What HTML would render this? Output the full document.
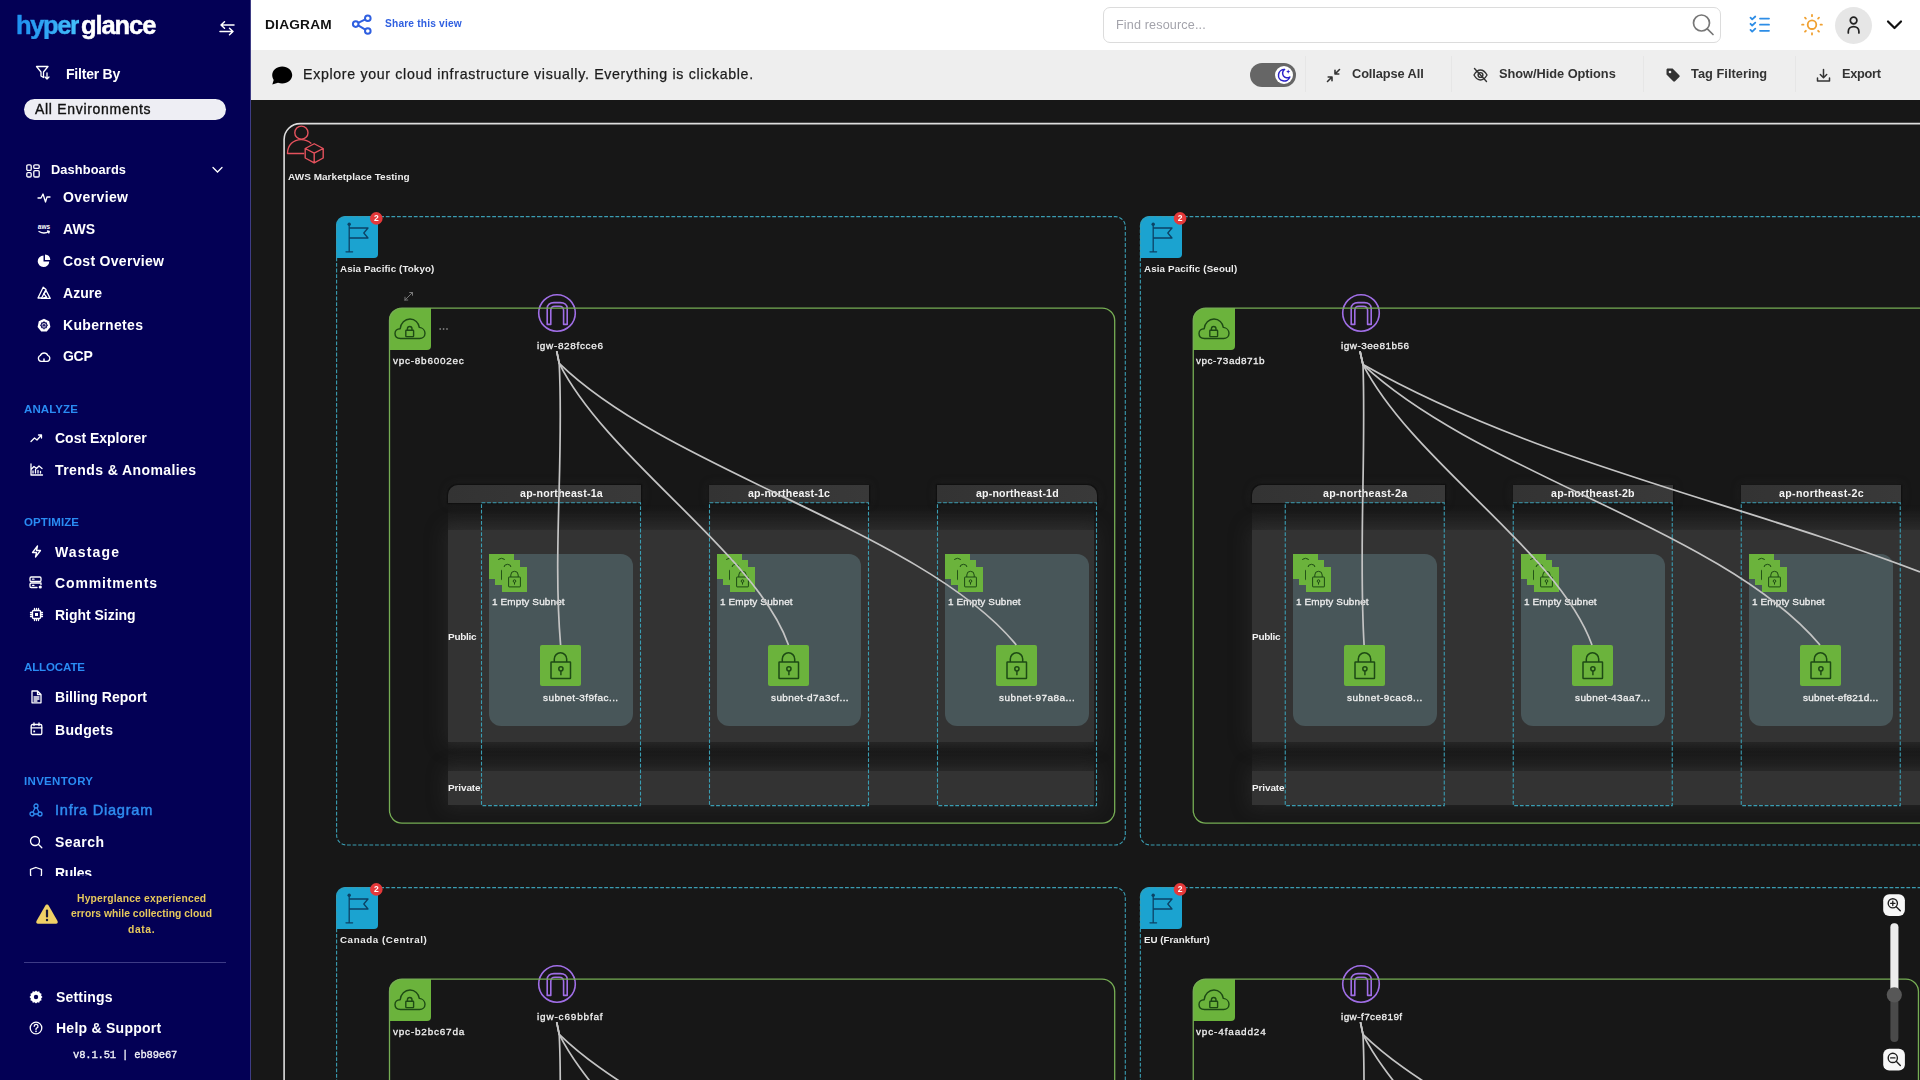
<!DOCTYPE html><html><head><meta charset="utf-8"><style>html,body{margin:0;padding:0;}body{width:1920px;height:1080px;overflow:hidden;position:relative;background:#171717;font-family:"Liberation Sans",sans-serif;}.t{position:absolute;white-space:nowrap;line-height:1;will-change:transform;}</style></head><body>
<div style="position:absolute;left:251px;top:100px;width:1669px;height:980px;background:#171717;"></div>
<div style="position:absolute;left:251px;top:100px;width:1669px;height:980px;overflow:hidden;">
<svg style="position:absolute;left:35px;top:24px;overflow:visible;" width="40" height="42" viewBox="0 0 40 42"><g fill="none" stroke="#e5525d" stroke-width="1.4" stroke-linejoin="round"><circle cx="15.4" cy="8.7" r="6.6"/><path d="M18.2,29.5 H1.5 C1.5,21 7.5,15.6 15,15.6 C19,15.6 22.5,17 25.3,19.5"/><path d="M28.2,19.75 L37.2,24.5 V34 L28.2,38.9 L19.2,34 V24.5 Z M19.2,24.5 L28.2,29.2 L37.2,24.5 M28.2,29.2 V38.9"/></g></svg>
<div class="t" style="left:37.00px;top:72.05px;font-size:9.98px;font-weight:bold;color:#ececec;letter-spacing:0.048px;font-family:'Liberation Sans',sans-serif;">AWS Marketplace Testing</div>
<div style="position:absolute;left:85.4px;top:115.6px;width:41.6px;height:42.4px;background:#1ba3d0;border-radius:9px 0 4px 0;"></div>
<svg style="position:absolute;left:85.39999999999998px;top:115.6px;overflow:visible;" width="42" height="42" viewBox="0 0 42 42"><g fill="none" stroke="#0c4265" stroke-width="1.3" stroke-linejoin="round" stroke-linecap="round"><path d="M13.2,9.5 V35.8 M10,35.8 H16.6 M13.2,12 H32 L27.8,17 L32,22 H13.2"/></g><circle cx="13.2" cy="8.3" r="1.7" fill="#0c4265"/></svg>
<div class="t" style="left:89.40px;top:164.32px;font-size:9.78px;font-weight:bold;color:#ededed;letter-spacing:0.116px;font-family:'Liberation Sans',sans-serif;">Asia Pacific (Tokyo)</div>
<div style="position:absolute;left:138px;top:208px;width:42px;height:42px;background:#6bb33c;border-radius:12px 0 4px 0;"></div>
<svg style="position:absolute;left:138px;top:208px;overflow:visible;" width="42" height="42" viewBox="0 0 42 42"><g fill="none" stroke="#1d4a14" stroke-width="1.4" stroke-linejoin="round"><path d="M11.5,30.5 C8,30.5 6,28.3 6,25.6 C6,22.8 8.2,20.7 11.2,20.7 C11.8,15.2 15.8,11 21,11 C26,11 29.7,14.6 30.3,19.4 C33.6,19.8 36,22.3 36,25.3 C36,28.3 33.6,30.5 30.6,30.5 Z"/><rect x="16.8" y="22.3" width="7.8" height="6.3" rx="0.6"/><path d="M18.4,22.3 V20.8 A2.3,2.3 0 0 1 23,20.8 V22.3"/></g></svg>
<svg style="position:absolute;left:188px;top:227px;overflow:visible;" width="10" height="4" viewBox="0 0 10 4"><g fill="#7a7a7a"><circle cx="1.2" cy="2" r="0.9"/><circle cx="4.6" cy="2" r="0.9"/><circle cx="8" cy="2" r="0.9"/></g></svg>
<svg style="position:absolute;left:152px;top:191px;overflow:visible;" width="12" height="11" viewBox="0 0 12 11"><g fill="none" stroke="#777" stroke-width="1" stroke-linecap="round"><path d="M2,9 L9.5,1.5 M2,9 V6.2 M2,9 H4.8 M9.5,1.5 H6.7 M9.5,1.5 V4.3"/></g></svg>
<div class="t" style="left:141.50px;top:256.45px;font-size:9.98px;font-weight:normal;color:#f0f0f0;letter-spacing:0.744px;font-family:'Liberation Sans',sans-serif;font-weight:500;-webkit-text-stroke:0.3px #f0f0f0;">vpc-8b6002ec</div>
<svg style="position:absolute;left:286.25px;top:193px;overflow:visible;" width="40" height="40" viewBox="0 0 40 40"><g fill="none" stroke="#a06ee6" stroke-width="1.6" stroke-linejoin="round"><circle cx="20" cy="20" r="18.3"/><path d="M10.2,31.4 V15.5 C10.2,11.8 13,9.6 17,9.6 H23.4 C27.4,9.6 30.2,11.8 30.2,15.5 V31.4 H26.6 V17.4 C26.6,14.8 25,13.3 22.4,13.3 H18 C15.4,13.3 13.8,14.8 13.8,17.4 V31.4 Z"/></g></svg>
<div class="t" style="left:285.90px;top:240.80px;font-size:9.98px;font-weight:normal;color:#f0f0f0;letter-spacing:0.653px;font-family:'Liberation Sans',sans-serif;font-weight:500;-webkit-text-stroke:0.3px #f0f0f0;">igw-828fcce6</div>
<div style="position:absolute;left:197px;top:406px;width:646px;height:23.6px;background:linear-gradient(to bottom,rgba(50,50,50,0),rgba(50,50,50,0.55));"></div>
<div style="position:absolute;left:197px;top:642.2px;width:646px;height:10px;background:linear-gradient(to top,rgba(50,50,50,0),rgba(50,50,50,0.3));"></div>
<div style="position:absolute;left:197px;top:650px;width:646px;height:20.5px;background:linear-gradient(to bottom,rgba(50,50,50,0),rgba(50,50,50,0.4));"></div>
<div style="position:absolute;left:197px;top:429.6px;width:646px;height:212.6px;background:#333333;box-shadow:0 0 18px 3px rgba(64,64,64,0.35);"></div>
<div style="position:absolute;left:197px;top:670.5px;width:646px;height:34.3px;background:#333333;box-shadow:0 0 18px 3px rgba(64,64,64,0.35);"></div>
<div style="position:absolute;left:197px;top:385px;width:193px;height:17.5px;background:linear-gradient(90deg,#333,#393939);border-radius:10px 0 0 0;box-shadow:0 0 2px 0.5px rgba(0,0,0,0.55),0 0 10px 1px rgba(60,60,60,0.25);"></div>
<div class="t" style="left:268.65px;top:387.82px;font-size:10.61px;font-weight:bold;color:#f4f4f4;letter-spacing:0.227px;font-family:'Liberation Sans',sans-serif;">ap-northeast-1a</div>
<div style="position:absolute;left:458px;top:385px;width:160px;height:17.5px;background:linear-gradient(90deg,#333,#393939);border-radius:0;box-shadow:0 0 2px 0.5px rgba(0,0,0,0.55),0 0 10px 1px rgba(60,60,60,0.25);"></div>
<div class="t" style="left:497.05px;top:387.82px;font-size:10.61px;font-weight:bold;color:#f4f4f4;letter-spacing:0.170px;font-family:'Liberation Sans',sans-serif;">ap-northeast-1c</div>
<div style="position:absolute;left:686px;top:385px;width:160px;height:17.5px;background:linear-gradient(90deg,#333,#393939);border-radius:0 10px 0 0;box-shadow:0 0 2px 0.5px rgba(0,0,0,0.55),0 0 10px 1px rgba(60,60,60,0.25);"></div>
<div class="t" style="left:724.70px;top:387.82px;font-size:10.61px;font-weight:bold;color:#f4f4f4;letter-spacing:0.179px;font-family:'Liberation Sans',sans-serif;">ap-northeast-1d</div>
<div class="t" style="left:197.00px;top:531.85px;font-size:9.98px;font-weight:bold;color:#f2f2f2;letter-spacing:-0.261px;font-family:'Liberation Sans',sans-serif;">Public</div>
<div class="t" style="left:196.80px;top:682.95px;font-size:9.98px;font-weight:bold;color:#f2f2f2;letter-spacing:-0.109px;font-family:'Liberation Sans',sans-serif;">Private</div>
<div style="position:absolute;left:238px;top:454px;width:144px;height:172px;background:#485659;border-radius:0 12px 12px 12px;"></div>
<svg style="position:absolute;left:238px;top:454px;overflow:visible;" width="25" height="25" viewBox="0 0 25 25"><rect x="0" y="0" width="25" height="25" fill="#6bb33c"/><g fill="none" stroke="#1d4a14" stroke-width="1" stroke-linejoin="round"><path d="M8.8,10 V8 A3.7,3.7 0 0 1 16.2,8 V10"/><rect x="6.6" y="10" width="11.8" height="9.9" rx="0.4"/><circle cx="12.5" cy="14.1" r="1.3"/><path d="M12.5,15.4 V17.6"/></g></svg>
<svg style="position:absolute;left:244px;top:460px;overflow:visible;" width="25" height="25" viewBox="0 0 25 25"><rect x="0" y="0" width="25" height="25" fill="#6bb33c"/><g fill="none" stroke="#1d4a14" stroke-width="1" stroke-linejoin="round"><path d="M8.8,10 V8 A3.7,3.7 0 0 1 16.2,8 V10"/><rect x="6.6" y="10" width="11.8" height="9.9" rx="0.4"/><circle cx="12.5" cy="14.1" r="1.3"/><path d="M12.5,15.4 V17.6"/></g></svg>
<svg style="position:absolute;left:251.2px;top:467.20000000000005px;overflow:visible;" width="25" height="25" viewBox="0 0 25 25"><rect x="0" y="0" width="25" height="25" fill="#6bb33c"/><g fill="none" stroke="#1d4a14" stroke-width="1" stroke-linejoin="round"><path d="M8.8,10 V8 A3.7,3.7 0 0 1 16.2,8 V10"/><rect x="6.6" y="10" width="11.8" height="9.9" rx="0.4"/><circle cx="12.5" cy="14.1" r="1.3"/><path d="M12.5,15.4 V17.6"/></g></svg>
<div class="t" style="left:240.90px;top:497.05px;font-size:9.98px;font-weight:normal;color:#eeeeee;letter-spacing:0.127px;font-family:'Liberation Sans',sans-serif;font-weight:500;-webkit-text-stroke:0.3px #eee;">1 Empty Subnet</div>
<div style="position:absolute;left:289.1px;top:545.1px;width:41px;height:41px;background:#6bb33c;border-radius:2px;"></div>
<svg style="position:absolute;left:289.1px;top:545.1px;overflow:visible;" width="41" height="41" viewBox="0 0 41 41"><g fill="none" stroke="#1d4a14" stroke-width="1.5" stroke-linejoin="round"><path d="M14.3,17 V14 A6.2,6.2 0 0 1 26.7,14 V17"/><rect x="11" y="17" width="19.5" height="16.5" rx="0.5"/><circle cx="20.9" cy="23.8" r="2.1"/><path d="M20.9,25.9 V30.3"/></g></svg>
<div class="t" style="left:292.10px;top:592.85px;font-size:9.98px;font-weight:normal;color:#f0f0f0;letter-spacing:0.425px;font-family:'Liberation Sans',sans-serif;font-weight:500;-webkit-text-stroke:0.3px #f0f0f0;">subnet-3f9fac...</div>
<div style="position:absolute;left:466px;top:454px;width:144px;height:172px;background:#485659;border-radius:0 12px 12px 12px;"></div>
<svg style="position:absolute;left:466px;top:454px;overflow:visible;" width="25" height="25" viewBox="0 0 25 25"><rect x="0" y="0" width="25" height="25" fill="#6bb33c"/><g fill="none" stroke="#1d4a14" stroke-width="1" stroke-linejoin="round"><path d="M8.8,10 V8 A3.7,3.7 0 0 1 16.2,8 V10"/><rect x="6.6" y="10" width="11.8" height="9.9" rx="0.4"/><circle cx="12.5" cy="14.1" r="1.3"/><path d="M12.5,15.4 V17.6"/></g></svg>
<svg style="position:absolute;left:472px;top:460px;overflow:visible;" width="25" height="25" viewBox="0 0 25 25"><rect x="0" y="0" width="25" height="25" fill="#6bb33c"/><g fill="none" stroke="#1d4a14" stroke-width="1" stroke-linejoin="round"><path d="M8.8,10 V8 A3.7,3.7 0 0 1 16.2,8 V10"/><rect x="6.6" y="10" width="11.8" height="9.9" rx="0.4"/><circle cx="12.5" cy="14.1" r="1.3"/><path d="M12.5,15.4 V17.6"/></g></svg>
<svg style="position:absolute;left:479.20000000000005px;top:467.20000000000005px;overflow:visible;" width="25" height="25" viewBox="0 0 25 25"><rect x="0" y="0" width="25" height="25" fill="#6bb33c"/><g fill="none" stroke="#1d4a14" stroke-width="1" stroke-linejoin="round"><path d="M8.8,10 V8 A3.7,3.7 0 0 1 16.2,8 V10"/><rect x="6.6" y="10" width="11.8" height="9.9" rx="0.4"/><circle cx="12.5" cy="14.1" r="1.3"/><path d="M12.5,15.4 V17.6"/></g></svg>
<div class="t" style="left:468.90px;top:497.05px;font-size:9.98px;font-weight:normal;color:#eeeeee;letter-spacing:0.127px;font-family:'Liberation Sans',sans-serif;font-weight:500;-webkit-text-stroke:0.3px #eee;">1 Empty Subnet</div>
<div style="position:absolute;left:517.1px;top:545.1px;width:41px;height:41px;background:#6bb33c;border-radius:2px;"></div>
<svg style="position:absolute;left:517.1px;top:545.1px;overflow:visible;" width="41" height="41" viewBox="0 0 41 41"><g fill="none" stroke="#1d4a14" stroke-width="1.5" stroke-linejoin="round"><path d="M14.3,17 V14 A6.2,6.2 0 0 1 26.7,14 V17"/><rect x="11" y="17" width="19.5" height="16.5" rx="0.5"/><circle cx="20.9" cy="23.8" r="2.1"/><path d="M20.9,25.9 V30.3"/></g></svg>
<div class="t" style="left:520.10px;top:592.85px;font-size:9.98px;font-weight:normal;color:#f0f0f0;letter-spacing:0.406px;font-family:'Liberation Sans',sans-serif;font-weight:500;-webkit-text-stroke:0.3px #f0f0f0;">subnet-d7a3cf...</div>
<div style="position:absolute;left:694px;top:454px;width:144px;height:172px;background:#485659;border-radius:0 12px 12px 12px;"></div>
<svg style="position:absolute;left:694px;top:454px;overflow:visible;" width="25" height="25" viewBox="0 0 25 25"><rect x="0" y="0" width="25" height="25" fill="#6bb33c"/><g fill="none" stroke="#1d4a14" stroke-width="1" stroke-linejoin="round"><path d="M8.8,10 V8 A3.7,3.7 0 0 1 16.2,8 V10"/><rect x="6.6" y="10" width="11.8" height="9.9" rx="0.4"/><circle cx="12.5" cy="14.1" r="1.3"/><path d="M12.5,15.4 V17.6"/></g></svg>
<svg style="position:absolute;left:700px;top:460px;overflow:visible;" width="25" height="25" viewBox="0 0 25 25"><rect x="0" y="0" width="25" height="25" fill="#6bb33c"/><g fill="none" stroke="#1d4a14" stroke-width="1" stroke-linejoin="round"><path d="M8.8,10 V8 A3.7,3.7 0 0 1 16.2,8 V10"/><rect x="6.6" y="10" width="11.8" height="9.9" rx="0.4"/><circle cx="12.5" cy="14.1" r="1.3"/><path d="M12.5,15.4 V17.6"/></g></svg>
<svg style="position:absolute;left:707.2px;top:467.20000000000005px;overflow:visible;" width="25" height="25" viewBox="0 0 25 25"><rect x="0" y="0" width="25" height="25" fill="#6bb33c"/><g fill="none" stroke="#1d4a14" stroke-width="1" stroke-linejoin="round"><path d="M8.8,10 V8 A3.7,3.7 0 0 1 16.2,8 V10"/><rect x="6.6" y="10" width="11.8" height="9.9" rx="0.4"/><circle cx="12.5" cy="14.1" r="1.3"/><path d="M12.5,15.4 V17.6"/></g></svg>
<div class="t" style="left:696.90px;top:497.05px;font-size:9.98px;font-weight:normal;color:#eeeeee;letter-spacing:0.127px;font-family:'Liberation Sans',sans-serif;font-weight:500;-webkit-text-stroke:0.3px #eee;">1 Empty Subnet</div>
<div style="position:absolute;left:745.1px;top:545.1px;width:41px;height:41px;background:#6bb33c;border-radius:2px;"></div>
<svg style="position:absolute;left:745.1px;top:545.1px;overflow:visible;" width="41" height="41" viewBox="0 0 41 41"><g fill="none" stroke="#1d4a14" stroke-width="1.5" stroke-linejoin="round"><path d="M14.3,17 V14 A6.2,6.2 0 0 1 26.7,14 V17"/><rect x="11" y="17" width="19.5" height="16.5" rx="0.5"/><circle cx="20.9" cy="23.8" r="2.1"/><path d="M20.9,25.9 V30.3"/></g></svg>
<div class="t" style="left:748.10px;top:592.85px;font-size:9.98px;font-weight:normal;color:#f0f0f0;letter-spacing:0.465px;font-family:'Liberation Sans',sans-serif;font-weight:500;-webkit-text-stroke:0.3px #f0f0f0;">subnet-97a8a...</div>
<div style="position:absolute;left:889.15px;top:115.6px;width:41.6px;height:42.4px;background:#1ba3d0;border-radius:9px 0 4px 0;"></div>
<svg style="position:absolute;left:889.1500000000001px;top:115.6px;overflow:visible;" width="42" height="42" viewBox="0 0 42 42"><g fill="none" stroke="#0c4265" stroke-width="1.3" stroke-linejoin="round" stroke-linecap="round"><path d="M13.2,9.5 V35.8 M10,35.8 H16.6 M13.2,12 H32 L27.8,17 L32,22 H13.2"/></g><circle cx="13.2" cy="8.3" r="1.7" fill="#0c4265"/></svg>
<div class="t" style="left:893.15px;top:164.32px;font-size:9.78px;font-weight:bold;color:#ededed;letter-spacing:0.134px;font-family:'Liberation Sans',sans-serif;">Asia Pacific (Seoul)</div>
<div style="position:absolute;left:941.75px;top:208px;width:42px;height:42px;background:#6bb33c;border-radius:12px 0 4px 0;"></div>
<svg style="position:absolute;left:941.75px;top:208px;overflow:visible;" width="42" height="42" viewBox="0 0 42 42"><g fill="none" stroke="#1d4a14" stroke-width="1.4" stroke-linejoin="round"><path d="M11.5,30.5 C8,30.5 6,28.3 6,25.6 C6,22.8 8.2,20.7 11.2,20.7 C11.8,15.2 15.8,11 21,11 C26,11 29.7,14.6 30.3,19.4 C33.6,19.8 36,22.3 36,25.3 C36,28.3 33.6,30.5 30.6,30.5 Z"/><rect x="16.8" y="22.3" width="7.8" height="6.3" rx="0.6"/><path d="M18.4,22.3 V20.8 A2.3,2.3 0 0 1 23,20.8 V22.3"/></g></svg>
<div class="t" style="left:945.25px;top:256.45px;font-size:9.98px;font-weight:normal;color:#f0f0f0;letter-spacing:0.493px;font-family:'Liberation Sans',sans-serif;font-weight:500;-webkit-text-stroke:0.3px #f0f0f0;">vpc-73ad871b</div>
<svg style="position:absolute;left:1090.0px;top:193px;overflow:visible;" width="40" height="40" viewBox="0 0 40 40"><g fill="none" stroke="#a06ee6" stroke-width="1.6" stroke-linejoin="round"><circle cx="20" cy="20" r="18.3"/><path d="M10.2,31.4 V15.5 C10.2,11.8 13,9.6 17,9.6 H23.4 C27.4,9.6 30.2,11.8 30.2,15.5 V31.4 H26.6 V17.4 C26.6,14.8 25,13.3 22.4,13.3 H18 C15.4,13.3 13.8,14.8 13.8,17.4 V31.4 Z"/></g></svg>
<div class="t" style="left:1089.65px;top:240.80px;font-size:9.98px;font-weight:normal;color:#f0f0f0;letter-spacing:0.498px;font-family:'Liberation Sans',sans-serif;font-weight:500;-webkit-text-stroke:0.3px #f0f0f0;">igw-3ee81b56</div>
<div style="position:absolute;left:1000.75px;top:406px;width:948.25px;height:23.6px;background:linear-gradient(to bottom,rgba(50,50,50,0),rgba(50,50,50,0.55));"></div>
<div style="position:absolute;left:1000.75px;top:642.2px;width:948.25px;height:10px;background:linear-gradient(to top,rgba(50,50,50,0),rgba(50,50,50,0.3));"></div>
<div style="position:absolute;left:1000.75px;top:650px;width:948.25px;height:20.5px;background:linear-gradient(to bottom,rgba(50,50,50,0),rgba(50,50,50,0.4));"></div>
<div style="position:absolute;left:1000.75px;top:429.6px;width:948.25px;height:212.6px;background:#333333;box-shadow:0 0 18px 3px rgba(64,64,64,0.35);"></div>
<div style="position:absolute;left:1000.75px;top:670.5px;width:948.25px;height:34.3px;background:#333333;box-shadow:0 0 18px 3px rgba(64,64,64,0.35);"></div>
<div style="position:absolute;left:1000.75px;top:385px;width:193px;height:17.5px;background:linear-gradient(90deg,#333,#393939);border-radius:10px 0 0 0;box-shadow:0 0 2px 0.5px rgba(0,0,0,0.55),0 0 10px 1px rgba(60,60,60,0.25);"></div>
<div class="t" style="left:1071.75px;top:387.82px;font-size:10.61px;font-weight:bold;color:#f4f4f4;letter-spacing:0.320px;font-family:'Liberation Sans',sans-serif;">ap-northeast-2a</div>
<div style="position:absolute;left:1261.75px;top:385px;width:160px;height:17.5px;background:linear-gradient(90deg,#333,#393939);border-radius:0;box-shadow:0 0 2px 0.5px rgba(0,0,0,0.55),0 0 10px 1px rgba(60,60,60,0.25);"></div>
<div class="t" style="left:1300.00px;top:387.82px;font-size:10.61px;font-weight:bold;color:#f4f4f4;letter-spacing:0.243px;font-family:'Liberation Sans',sans-serif;">ap-northeast-2b</div>
<div style="position:absolute;left:1489.75px;top:385px;width:160px;height:17.5px;background:linear-gradient(90deg,#333,#393939);border-radius:0;box-shadow:0 0 2px 0.5px rgba(0,0,0,0.55),0 0 10px 1px rgba(60,60,60,0.25);"></div>
<div class="t" style="left:1527.50px;top:387.82px;font-size:10.61px;font-weight:bold;color:#f4f4f4;letter-spacing:0.356px;font-family:'Liberation Sans',sans-serif;">ap-northeast-2c</div>
<div style="position:absolute;left:1717.75px;top:385px;width:160px;height:17.5px;background:linear-gradient(90deg,#333,#393939);border-radius:0;box-shadow:0 0 2px 0.5px rgba(0,0,0,0.55),0 0 10px 1px rgba(60,60,60,0.25);"></div>
<div class="t" style="left:1755.75px;top:387.82px;font-size:10.61px;font-weight:bold;color:#f4f4f4;letter-spacing:0.279px;font-family:'Liberation Sans',sans-serif;">ap-northeast-2d</div>
<div class="t" style="left:1000.75px;top:531.85px;font-size:9.98px;font-weight:bold;color:#f2f2f2;letter-spacing:-0.261px;font-family:'Liberation Sans',sans-serif;">Public</div>
<div class="t" style="left:1000.55px;top:682.95px;font-size:9.98px;font-weight:bold;color:#f2f2f2;letter-spacing:-0.109px;font-family:'Liberation Sans',sans-serif;">Private</div>
<div style="position:absolute;left:1041.75px;top:454px;width:144px;height:172px;background:#485659;border-radius:0 12px 12px 12px;"></div>
<svg style="position:absolute;left:1041.75px;top:454px;overflow:visible;" width="25" height="25" viewBox="0 0 25 25"><rect x="0" y="0" width="25" height="25" fill="#6bb33c"/><g fill="none" stroke="#1d4a14" stroke-width="1" stroke-linejoin="round"><path d="M8.8,10 V8 A3.7,3.7 0 0 1 16.2,8 V10"/><rect x="6.6" y="10" width="11.8" height="9.9" rx="0.4"/><circle cx="12.5" cy="14.1" r="1.3"/><path d="M12.5,15.4 V17.6"/></g></svg>
<svg style="position:absolute;left:1047.75px;top:460px;overflow:visible;" width="25" height="25" viewBox="0 0 25 25"><rect x="0" y="0" width="25" height="25" fill="#6bb33c"/><g fill="none" stroke="#1d4a14" stroke-width="1" stroke-linejoin="round"><path d="M8.8,10 V8 A3.7,3.7 0 0 1 16.2,8 V10"/><rect x="6.6" y="10" width="11.8" height="9.9" rx="0.4"/><circle cx="12.5" cy="14.1" r="1.3"/><path d="M12.5,15.4 V17.6"/></g></svg>
<svg style="position:absolute;left:1054.95px;top:467.20000000000005px;overflow:visible;" width="25" height="25" viewBox="0 0 25 25"><rect x="0" y="0" width="25" height="25" fill="#6bb33c"/><g fill="none" stroke="#1d4a14" stroke-width="1" stroke-linejoin="round"><path d="M8.8,10 V8 A3.7,3.7 0 0 1 16.2,8 V10"/><rect x="6.6" y="10" width="11.8" height="9.9" rx="0.4"/><circle cx="12.5" cy="14.1" r="1.3"/><path d="M12.5,15.4 V17.6"/></g></svg>
<div class="t" style="left:1044.65px;top:497.05px;font-size:9.98px;font-weight:normal;color:#eeeeee;letter-spacing:0.127px;font-family:'Liberation Sans',sans-serif;font-weight:500;-webkit-text-stroke:0.3px #eee;">1 Empty Subnet</div>
<div style="position:absolute;left:1092.85px;top:545.1px;width:41px;height:41px;background:#6bb33c;border-radius:2px;"></div>
<svg style="position:absolute;left:1092.85px;top:545.1px;overflow:visible;" width="41" height="41" viewBox="0 0 41 41"><g fill="none" stroke="#1d4a14" stroke-width="1.5" stroke-linejoin="round"><path d="M14.3,17 V14 A6.2,6.2 0 0 1 26.7,14 V17"/><rect x="11" y="17" width="19.5" height="16.5" rx="0.5"/><circle cx="20.9" cy="23.8" r="2.1"/><path d="M20.9,25.9 V30.3"/></g></svg>
<div class="t" style="left:1095.85px;top:592.85px;font-size:9.98px;font-weight:normal;color:#f0f0f0;letter-spacing:0.509px;font-family:'Liberation Sans',sans-serif;font-weight:500;-webkit-text-stroke:0.3px #f0f0f0;">subnet-9cac8...</div>
<div style="position:absolute;left:1269.75px;top:454px;width:144px;height:172px;background:#485659;border-radius:0 12px 12px 12px;"></div>
<svg style="position:absolute;left:1269.75px;top:454px;overflow:visible;" width="25" height="25" viewBox="0 0 25 25"><rect x="0" y="0" width="25" height="25" fill="#6bb33c"/><g fill="none" stroke="#1d4a14" stroke-width="1" stroke-linejoin="round"><path d="M8.8,10 V8 A3.7,3.7 0 0 1 16.2,8 V10"/><rect x="6.6" y="10" width="11.8" height="9.9" rx="0.4"/><circle cx="12.5" cy="14.1" r="1.3"/><path d="M12.5,15.4 V17.6"/></g></svg>
<svg style="position:absolute;left:1275.75px;top:460px;overflow:visible;" width="25" height="25" viewBox="0 0 25 25"><rect x="0" y="0" width="25" height="25" fill="#6bb33c"/><g fill="none" stroke="#1d4a14" stroke-width="1" stroke-linejoin="round"><path d="M8.8,10 V8 A3.7,3.7 0 0 1 16.2,8 V10"/><rect x="6.6" y="10" width="11.8" height="9.9" rx="0.4"/><circle cx="12.5" cy="14.1" r="1.3"/><path d="M12.5,15.4 V17.6"/></g></svg>
<svg style="position:absolute;left:1282.95px;top:467.20000000000005px;overflow:visible;" width="25" height="25" viewBox="0 0 25 25"><rect x="0" y="0" width="25" height="25" fill="#6bb33c"/><g fill="none" stroke="#1d4a14" stroke-width="1" stroke-linejoin="round"><path d="M8.8,10 V8 A3.7,3.7 0 0 1 16.2,8 V10"/><rect x="6.6" y="10" width="11.8" height="9.9" rx="0.4"/><circle cx="12.5" cy="14.1" r="1.3"/><path d="M12.5,15.4 V17.6"/></g></svg>
<div class="t" style="left:1272.65px;top:497.05px;font-size:9.98px;font-weight:normal;color:#eeeeee;letter-spacing:0.127px;font-family:'Liberation Sans',sans-serif;font-weight:500;-webkit-text-stroke:0.3px #eee;">1 Empty Subnet</div>
<div style="position:absolute;left:1320.85px;top:545.1px;width:41px;height:41px;background:#6bb33c;border-radius:2px;"></div>
<svg style="position:absolute;left:1320.85px;top:545.1px;overflow:visible;" width="41" height="41" viewBox="0 0 41 41"><g fill="none" stroke="#1d4a14" stroke-width="1.5" stroke-linejoin="round"><path d="M14.3,17 V14 A6.2,6.2 0 0 1 26.7,14 V17"/><rect x="11" y="17" width="19.5" height="16.5" rx="0.5"/><circle cx="20.9" cy="23.8" r="2.1"/><path d="M20.9,25.9 V30.3"/></g></svg>
<div class="t" style="left:1323.85px;top:592.85px;font-size:9.98px;font-weight:normal;color:#f0f0f0;letter-spacing:0.408px;font-family:'Liberation Sans',sans-serif;font-weight:500;-webkit-text-stroke:0.3px #f0f0f0;">subnet-43aa7...</div>
<div style="position:absolute;left:1497.75px;top:454px;width:144px;height:172px;background:#485659;border-radius:0 12px 12px 12px;"></div>
<svg style="position:absolute;left:1497.75px;top:454px;overflow:visible;" width="25" height="25" viewBox="0 0 25 25"><rect x="0" y="0" width="25" height="25" fill="#6bb33c"/><g fill="none" stroke="#1d4a14" stroke-width="1" stroke-linejoin="round"><path d="M8.8,10 V8 A3.7,3.7 0 0 1 16.2,8 V10"/><rect x="6.6" y="10" width="11.8" height="9.9" rx="0.4"/><circle cx="12.5" cy="14.1" r="1.3"/><path d="M12.5,15.4 V17.6"/></g></svg>
<svg style="position:absolute;left:1503.75px;top:460px;overflow:visible;" width="25" height="25" viewBox="0 0 25 25"><rect x="0" y="0" width="25" height="25" fill="#6bb33c"/><g fill="none" stroke="#1d4a14" stroke-width="1" stroke-linejoin="round"><path d="M8.8,10 V8 A3.7,3.7 0 0 1 16.2,8 V10"/><rect x="6.6" y="10" width="11.8" height="9.9" rx="0.4"/><circle cx="12.5" cy="14.1" r="1.3"/><path d="M12.5,15.4 V17.6"/></g></svg>
<svg style="position:absolute;left:1510.95px;top:467.20000000000005px;overflow:visible;" width="25" height="25" viewBox="0 0 25 25"><rect x="0" y="0" width="25" height="25" fill="#6bb33c"/><g fill="none" stroke="#1d4a14" stroke-width="1" stroke-linejoin="round"><path d="M8.8,10 V8 A3.7,3.7 0 0 1 16.2,8 V10"/><rect x="6.6" y="10" width="11.8" height="9.9" rx="0.4"/><circle cx="12.5" cy="14.1" r="1.3"/><path d="M12.5,15.4 V17.6"/></g></svg>
<div class="t" style="left:1500.65px;top:497.05px;font-size:9.98px;font-weight:normal;color:#eeeeee;letter-spacing:0.127px;font-family:'Liberation Sans',sans-serif;font-weight:500;-webkit-text-stroke:0.3px #eee;">1 Empty Subnet</div>
<div style="position:absolute;left:1548.85px;top:545.1px;width:41px;height:41px;background:#6bb33c;border-radius:2px;"></div>
<svg style="position:absolute;left:1548.85px;top:545.1px;overflow:visible;" width="41" height="41" viewBox="0 0 41 41"><g fill="none" stroke="#1d4a14" stroke-width="1.5" stroke-linejoin="round"><path d="M14.3,17 V14 A6.2,6.2 0 0 1 26.7,14 V17"/><rect x="11" y="17" width="19.5" height="16.5" rx="0.5"/><circle cx="20.9" cy="23.8" r="2.1"/><path d="M20.9,25.9 V30.3"/></g></svg>
<div class="t" style="left:1551.85px;top:592.85px;font-size:9.98px;font-weight:normal;color:#f0f0f0;letter-spacing:0.215px;font-family:'Liberation Sans',sans-serif;font-weight:500;-webkit-text-stroke:0.3px #f0f0f0;">subnet-ef821d...</div>
<div style="position:absolute;left:1725.75px;top:454px;width:144px;height:172px;background:#485659;border-radius:0 12px 12px 12px;"></div>
<svg style="position:absolute;left:1725.75px;top:454px;overflow:visible;" width="25" height="25" viewBox="0 0 25 25"><rect x="0" y="0" width="25" height="25" fill="#6bb33c"/><g fill="none" stroke="#1d4a14" stroke-width="1" stroke-linejoin="round"><path d="M8.8,10 V8 A3.7,3.7 0 0 1 16.2,8 V10"/><rect x="6.6" y="10" width="11.8" height="9.9" rx="0.4"/><circle cx="12.5" cy="14.1" r="1.3"/><path d="M12.5,15.4 V17.6"/></g></svg>
<svg style="position:absolute;left:1731.75px;top:460px;overflow:visible;" width="25" height="25" viewBox="0 0 25 25"><rect x="0" y="0" width="25" height="25" fill="#6bb33c"/><g fill="none" stroke="#1d4a14" stroke-width="1" stroke-linejoin="round"><path d="M8.8,10 V8 A3.7,3.7 0 0 1 16.2,8 V10"/><rect x="6.6" y="10" width="11.8" height="9.9" rx="0.4"/><circle cx="12.5" cy="14.1" r="1.3"/><path d="M12.5,15.4 V17.6"/></g></svg>
<svg style="position:absolute;left:1738.95px;top:467.20000000000005px;overflow:visible;" width="25" height="25" viewBox="0 0 25 25"><rect x="0" y="0" width="25" height="25" fill="#6bb33c"/><g fill="none" stroke="#1d4a14" stroke-width="1" stroke-linejoin="round"><path d="M8.8,10 V8 A3.7,3.7 0 0 1 16.2,8 V10"/><rect x="6.6" y="10" width="11.8" height="9.9" rx="0.4"/><circle cx="12.5" cy="14.1" r="1.3"/><path d="M12.5,15.4 V17.6"/></g></svg>
<div class="t" style="left:1728.65px;top:497.05px;font-size:9.98px;font-weight:normal;color:#eeeeee;letter-spacing:0.127px;font-family:'Liberation Sans',sans-serif;font-weight:500;-webkit-text-stroke:0.3px #eee;">1 Empty Subnet</div>
<div style="position:absolute;left:1776.85px;top:545.1px;width:41px;height:41px;background:#6bb33c;border-radius:2px;"></div>
<svg style="position:absolute;left:1776.85px;top:545.1px;overflow:visible;" width="41" height="41" viewBox="0 0 41 41"><g fill="none" stroke="#1d4a14" stroke-width="1.5" stroke-linejoin="round"><path d="M14.3,17 V14 A6.2,6.2 0 0 1 26.7,14 V17"/><rect x="11" y="17" width="19.5" height="16.5" rx="0.5"/><circle cx="20.9" cy="23.8" r="2.1"/><path d="M20.9,25.9 V30.3"/></g></svg>
<div class="t" style="left:1779.85px;top:592.85px;font-size:9.98px;font-weight:normal;color:#f0f0f0;letter-spacing:0.852px;font-family:'Liberation Sans',sans-serif;font-weight:500;-webkit-text-stroke:0.3px #f0f0f0;">subnet-0000...</div>
<div style="position:absolute;left:85.4px;top:786.6px;width:41.6px;height:42.4px;background:#1ba3d0;border-radius:9px 0 4px 0;"></div>
<svg style="position:absolute;left:85.39999999999998px;top:786.6px;overflow:visible;" width="42" height="42" viewBox="0 0 42 42"><g fill="none" stroke="#0c4265" stroke-width="1.3" stroke-linejoin="round" stroke-linecap="round"><path d="M13.2,9.5 V35.8 M10,35.8 H16.6 M13.2,12 H32 L27.8,17 L32,22 H13.2"/></g><circle cx="13.2" cy="8.3" r="1.7" fill="#0c4265"/></svg>
<div class="t" style="left:89.40px;top:835.32px;font-size:9.78px;font-weight:bold;color:#ededed;letter-spacing:0.572px;font-family:'Liberation Sans',sans-serif;">Canada (Central)</div>
<div style="position:absolute;left:138px;top:879px;width:42px;height:42px;background:#6bb33c;border-radius:12px 0 4px 0;"></div>
<svg style="position:absolute;left:138px;top:879px;overflow:visible;" width="42" height="42" viewBox="0 0 42 42"><g fill="none" stroke="#1d4a14" stroke-width="1.4" stroke-linejoin="round"><path d="M11.5,30.5 C8,30.5 6,28.3 6,25.6 C6,22.8 8.2,20.7 11.2,20.7 C11.8,15.2 15.8,11 21,11 C26,11 29.7,14.6 30.3,19.4 C33.6,19.8 36,22.3 36,25.3 C36,28.3 33.6,30.5 30.6,30.5 Z"/><rect x="16.8" y="22.3" width="7.8" height="6.3" rx="0.6"/><path d="M18.4,22.3 V20.8 A2.3,2.3 0 0 1 23,20.8 V22.3"/></g></svg>
<div class="t" style="left:141.50px;top:927.45px;font-size:9.98px;font-weight:normal;color:#f0f0f0;letter-spacing:0.789px;font-family:'Liberation Sans',sans-serif;font-weight:500;-webkit-text-stroke:0.3px #f0f0f0;">vpc-b2bc67da</div>
<svg style="position:absolute;left:286.25px;top:864px;overflow:visible;" width="40" height="40" viewBox="0 0 40 40"><g fill="none" stroke="#a06ee6" stroke-width="1.6" stroke-linejoin="round"><circle cx="20" cy="20" r="18.3"/><path d="M10.2,31.4 V15.5 C10.2,11.8 13,9.6 17,9.6 H23.4 C27.4,9.6 30.2,11.8 30.2,15.5 V31.4 H26.6 V17.4 C26.6,14.8 25,13.3 22.4,13.3 H18 C15.4,13.3 13.8,14.8 13.8,17.4 V31.4 Z"/></g></svg>
<div class="t" style="left:285.90px;top:911.80px;font-size:9.98px;font-weight:normal;color:#f0f0f0;letter-spacing:0.828px;font-family:'Liberation Sans',sans-serif;font-weight:500;-webkit-text-stroke:0.3px #f0f0f0;">igw-c69bbfaf</div>
<div style="position:absolute;left:197px;top:1077px;width:646px;height:23.6px;background:linear-gradient(to bottom,rgba(50,50,50,0),rgba(50,50,50,0.55));"></div>
<div style="position:absolute;left:197px;top:1313.2px;width:646px;height:10px;background:linear-gradient(to top,rgba(50,50,50,0),rgba(50,50,50,0.3));"></div>
<div style="position:absolute;left:197px;top:1321px;width:646px;height:20.5px;background:linear-gradient(to bottom,rgba(50,50,50,0),rgba(50,50,50,0.4));"></div>
<div style="position:absolute;left:197px;top:1100.6px;width:646px;height:212.6px;background:#333333;box-shadow:0 0 18px 3px rgba(64,64,64,0.35);"></div>
<div style="position:absolute;left:197px;top:1341.5px;width:646px;height:34.3px;background:#333333;box-shadow:0 0 18px 3px rgba(64,64,64,0.35);"></div>
<div style="position:absolute;left:197px;top:1056px;width:193px;height:17.5px;background:linear-gradient(90deg,#333,#393939);border-radius:10px 0 0 0;box-shadow:0 0 2px 0.5px rgba(0,0,0,0.55),0 0 10px 1px rgba(60,60,60,0.25);"></div>
<div class="t" style="left:268.65px;top:1058.82px;font-size:10.61px;font-weight:bold;color:#f4f4f4;letter-spacing:0.227px;font-family:'Liberation Sans',sans-serif;">ap-northeast-1a</div>
<div style="position:absolute;left:458px;top:1056px;width:160px;height:17.5px;background:linear-gradient(90deg,#333,#393939);border-radius:0;box-shadow:0 0 2px 0.5px rgba(0,0,0,0.55),0 0 10px 1px rgba(60,60,60,0.25);"></div>
<div class="t" style="left:497.05px;top:1058.82px;font-size:10.61px;font-weight:bold;color:#f4f4f4;letter-spacing:0.170px;font-family:'Liberation Sans',sans-serif;">ap-northeast-1c</div>
<div style="position:absolute;left:686px;top:1056px;width:160px;height:17.5px;background:linear-gradient(90deg,#333,#393939);border-radius:0 10px 0 0;box-shadow:0 0 2px 0.5px rgba(0,0,0,0.55),0 0 10px 1px rgba(60,60,60,0.25);"></div>
<div class="t" style="left:724.70px;top:1058.82px;font-size:10.61px;font-weight:bold;color:#f4f4f4;letter-spacing:0.179px;font-family:'Liberation Sans',sans-serif;">ap-northeast-1d</div>
<div class="t" style="left:197.00px;top:1202.85px;font-size:9.98px;font-weight:bold;color:#f2f2f2;letter-spacing:-0.261px;font-family:'Liberation Sans',sans-serif;">Public</div>
<div class="t" style="left:196.80px;top:1353.95px;font-size:9.98px;font-weight:bold;color:#f2f2f2;letter-spacing:-0.109px;font-family:'Liberation Sans',sans-serif;">Private</div>
<div style="position:absolute;left:238px;top:1125px;width:144px;height:172px;background:#485659;border-radius:0 12px 12px 12px;"></div>
<svg style="position:absolute;left:238px;top:1125px;overflow:visible;" width="25" height="25" viewBox="0 0 25 25"><rect x="0" y="0" width="25" height="25" fill="#6bb33c"/><g fill="none" stroke="#1d4a14" stroke-width="1" stroke-linejoin="round"><path d="M8.8,10 V8 A3.7,3.7 0 0 1 16.2,8 V10"/><rect x="6.6" y="10" width="11.8" height="9.9" rx="0.4"/><circle cx="12.5" cy="14.1" r="1.3"/><path d="M12.5,15.4 V17.6"/></g></svg>
<svg style="position:absolute;left:244px;top:1131px;overflow:visible;" width="25" height="25" viewBox="0 0 25 25"><rect x="0" y="0" width="25" height="25" fill="#6bb33c"/><g fill="none" stroke="#1d4a14" stroke-width="1" stroke-linejoin="round"><path d="M8.8,10 V8 A3.7,3.7 0 0 1 16.2,8 V10"/><rect x="6.6" y="10" width="11.8" height="9.9" rx="0.4"/><circle cx="12.5" cy="14.1" r="1.3"/><path d="M12.5,15.4 V17.6"/></g></svg>
<svg style="position:absolute;left:251.2px;top:1138.2px;overflow:visible;" width="25" height="25" viewBox="0 0 25 25"><rect x="0" y="0" width="25" height="25" fill="#6bb33c"/><g fill="none" stroke="#1d4a14" stroke-width="1" stroke-linejoin="round"><path d="M8.8,10 V8 A3.7,3.7 0 0 1 16.2,8 V10"/><rect x="6.6" y="10" width="11.8" height="9.9" rx="0.4"/><circle cx="12.5" cy="14.1" r="1.3"/><path d="M12.5,15.4 V17.6"/></g></svg>
<div class="t" style="left:240.90px;top:1168.05px;font-size:9.98px;font-weight:normal;color:#eeeeee;letter-spacing:0.127px;font-family:'Liberation Sans',sans-serif;font-weight:500;-webkit-text-stroke:0.3px #eee;">1 Empty Subnet</div>
<div style="position:absolute;left:289.1px;top:1216.1px;width:41px;height:41px;background:#6bb33c;border-radius:2px;"></div>
<svg style="position:absolute;left:289.1px;top:1216.1px;overflow:visible;" width="41" height="41" viewBox="0 0 41 41"><g fill="none" stroke="#1d4a14" stroke-width="1.5" stroke-linejoin="round"><path d="M14.3,17 V14 A6.2,6.2 0 0 1 26.7,14 V17"/><rect x="11" y="17" width="19.5" height="16.5" rx="0.5"/><circle cx="20.9" cy="23.8" r="2.1"/><path d="M20.9,25.9 V30.3"/></g></svg>
<div class="t" style="left:292.10px;top:1263.85px;font-size:9.98px;font-weight:normal;color:#f0f0f0;letter-spacing:0.425px;font-family:'Liberation Sans',sans-serif;font-weight:500;-webkit-text-stroke:0.3px #f0f0f0;">subnet-3f9fac...</div>
<div style="position:absolute;left:466px;top:1125px;width:144px;height:172px;background:#485659;border-radius:0 12px 12px 12px;"></div>
<svg style="position:absolute;left:466px;top:1125px;overflow:visible;" width="25" height="25" viewBox="0 0 25 25"><rect x="0" y="0" width="25" height="25" fill="#6bb33c"/><g fill="none" stroke="#1d4a14" stroke-width="1" stroke-linejoin="round"><path d="M8.8,10 V8 A3.7,3.7 0 0 1 16.2,8 V10"/><rect x="6.6" y="10" width="11.8" height="9.9" rx="0.4"/><circle cx="12.5" cy="14.1" r="1.3"/><path d="M12.5,15.4 V17.6"/></g></svg>
<svg style="position:absolute;left:472px;top:1131px;overflow:visible;" width="25" height="25" viewBox="0 0 25 25"><rect x="0" y="0" width="25" height="25" fill="#6bb33c"/><g fill="none" stroke="#1d4a14" stroke-width="1" stroke-linejoin="round"><path d="M8.8,10 V8 A3.7,3.7 0 0 1 16.2,8 V10"/><rect x="6.6" y="10" width="11.8" height="9.9" rx="0.4"/><circle cx="12.5" cy="14.1" r="1.3"/><path d="M12.5,15.4 V17.6"/></g></svg>
<svg style="position:absolute;left:479.20000000000005px;top:1138.2px;overflow:visible;" width="25" height="25" viewBox="0 0 25 25"><rect x="0" y="0" width="25" height="25" fill="#6bb33c"/><g fill="none" stroke="#1d4a14" stroke-width="1" stroke-linejoin="round"><path d="M8.8,10 V8 A3.7,3.7 0 0 1 16.2,8 V10"/><rect x="6.6" y="10" width="11.8" height="9.9" rx="0.4"/><circle cx="12.5" cy="14.1" r="1.3"/><path d="M12.5,15.4 V17.6"/></g></svg>
<div class="t" style="left:468.90px;top:1168.05px;font-size:9.98px;font-weight:normal;color:#eeeeee;letter-spacing:0.127px;font-family:'Liberation Sans',sans-serif;font-weight:500;-webkit-text-stroke:0.3px #eee;">1 Empty Subnet</div>
<div style="position:absolute;left:517.1px;top:1216.1px;width:41px;height:41px;background:#6bb33c;border-radius:2px;"></div>
<svg style="position:absolute;left:517.1px;top:1216.1px;overflow:visible;" width="41" height="41" viewBox="0 0 41 41"><g fill="none" stroke="#1d4a14" stroke-width="1.5" stroke-linejoin="round"><path d="M14.3,17 V14 A6.2,6.2 0 0 1 26.7,14 V17"/><rect x="11" y="17" width="19.5" height="16.5" rx="0.5"/><circle cx="20.9" cy="23.8" r="2.1"/><path d="M20.9,25.9 V30.3"/></g></svg>
<div class="t" style="left:520.10px;top:1263.85px;font-size:9.98px;font-weight:normal;color:#f0f0f0;letter-spacing:0.406px;font-family:'Liberation Sans',sans-serif;font-weight:500;-webkit-text-stroke:0.3px #f0f0f0;">subnet-d7a3cf...</div>
<div style="position:absolute;left:694px;top:1125px;width:144px;height:172px;background:#485659;border-radius:0 12px 12px 12px;"></div>
<svg style="position:absolute;left:694px;top:1125px;overflow:visible;" width="25" height="25" viewBox="0 0 25 25"><rect x="0" y="0" width="25" height="25" fill="#6bb33c"/><g fill="none" stroke="#1d4a14" stroke-width="1" stroke-linejoin="round"><path d="M8.8,10 V8 A3.7,3.7 0 0 1 16.2,8 V10"/><rect x="6.6" y="10" width="11.8" height="9.9" rx="0.4"/><circle cx="12.5" cy="14.1" r="1.3"/><path d="M12.5,15.4 V17.6"/></g></svg>
<svg style="position:absolute;left:700px;top:1131px;overflow:visible;" width="25" height="25" viewBox="0 0 25 25"><rect x="0" y="0" width="25" height="25" fill="#6bb33c"/><g fill="none" stroke="#1d4a14" stroke-width="1" stroke-linejoin="round"><path d="M8.8,10 V8 A3.7,3.7 0 0 1 16.2,8 V10"/><rect x="6.6" y="10" width="11.8" height="9.9" rx="0.4"/><circle cx="12.5" cy="14.1" r="1.3"/><path d="M12.5,15.4 V17.6"/></g></svg>
<svg style="position:absolute;left:707.2px;top:1138.2px;overflow:visible;" width="25" height="25" viewBox="0 0 25 25"><rect x="0" y="0" width="25" height="25" fill="#6bb33c"/><g fill="none" stroke="#1d4a14" stroke-width="1" stroke-linejoin="round"><path d="M8.8,10 V8 A3.7,3.7 0 0 1 16.2,8 V10"/><rect x="6.6" y="10" width="11.8" height="9.9" rx="0.4"/><circle cx="12.5" cy="14.1" r="1.3"/><path d="M12.5,15.4 V17.6"/></g></svg>
<div class="t" style="left:696.90px;top:1168.05px;font-size:9.98px;font-weight:normal;color:#eeeeee;letter-spacing:0.127px;font-family:'Liberation Sans',sans-serif;font-weight:500;-webkit-text-stroke:0.3px #eee;">1 Empty Subnet</div>
<div style="position:absolute;left:745.1px;top:1216.1px;width:41px;height:41px;background:#6bb33c;border-radius:2px;"></div>
<svg style="position:absolute;left:745.1px;top:1216.1px;overflow:visible;" width="41" height="41" viewBox="0 0 41 41"><g fill="none" stroke="#1d4a14" stroke-width="1.5" stroke-linejoin="round"><path d="M14.3,17 V14 A6.2,6.2 0 0 1 26.7,14 V17"/><rect x="11" y="17" width="19.5" height="16.5" rx="0.5"/><circle cx="20.9" cy="23.8" r="2.1"/><path d="M20.9,25.9 V30.3"/></g></svg>
<div class="t" style="left:748.10px;top:1263.85px;font-size:9.98px;font-weight:normal;color:#f0f0f0;letter-spacing:0.465px;font-family:'Liberation Sans',sans-serif;font-weight:500;-webkit-text-stroke:0.3px #f0f0f0;">subnet-97a8a...</div>
<div style="position:absolute;left:889.15px;top:786.6px;width:41.6px;height:42.4px;background:#1ba3d0;border-radius:9px 0 4px 0;"></div>
<svg style="position:absolute;left:889.1500000000001px;top:786.6px;overflow:visible;" width="42" height="42" viewBox="0 0 42 42"><g fill="none" stroke="#0c4265" stroke-width="1.3" stroke-linejoin="round" stroke-linecap="round"><path d="M13.2,9.5 V35.8 M10,35.8 H16.6 M13.2,12 H32 L27.8,17 L32,22 H13.2"/></g><circle cx="13.2" cy="8.3" r="1.7" fill="#0c4265"/></svg>
<div class="t" style="left:893.15px;top:835.32px;font-size:9.78px;font-weight:bold;color:#ededed;letter-spacing:0.002px;font-family:'Liberation Sans',sans-serif;">EU (Frankfurt)</div>
<div style="position:absolute;left:941.75px;top:879px;width:42px;height:42px;background:#6bb33c;border-radius:12px 0 4px 0;"></div>
<svg style="position:absolute;left:941.75px;top:879px;overflow:visible;" width="42" height="42" viewBox="0 0 42 42"><g fill="none" stroke="#1d4a14" stroke-width="1.4" stroke-linejoin="round"><path d="M11.5,30.5 C8,30.5 6,28.3 6,25.6 C6,22.8 8.2,20.7 11.2,20.7 C11.8,15.2 15.8,11 21,11 C26,11 29.7,14.6 30.3,19.4 C33.6,19.8 36,22.3 36,25.3 C36,28.3 33.6,30.5 30.6,30.5 Z"/><rect x="16.8" y="22.3" width="7.8" height="6.3" rx="0.6"/><path d="M18.4,22.3 V20.8 A2.3,2.3 0 0 1 23,20.8 V22.3"/></g></svg>
<div class="t" style="left:945.25px;top:927.45px;font-size:9.98px;font-weight:normal;color:#f0f0f0;letter-spacing:0.855px;font-family:'Liberation Sans',sans-serif;font-weight:500;-webkit-text-stroke:0.3px #f0f0f0;">vpc-4faadd24</div>
<svg style="position:absolute;left:1090.0px;top:864px;overflow:visible;" width="40" height="40" viewBox="0 0 40 40"><g fill="none" stroke="#a06ee6" stroke-width="1.6" stroke-linejoin="round"><circle cx="20" cy="20" r="18.3"/><path d="M10.2,31.4 V15.5 C10.2,11.8 13,9.6 17,9.6 H23.4 C27.4,9.6 30.2,11.8 30.2,15.5 V31.4 H26.6 V17.4 C26.6,14.8 25,13.3 22.4,13.3 H18 C15.4,13.3 13.8,14.8 13.8,17.4 V31.4 Z"/></g></svg>
<div class="t" style="left:1089.65px;top:911.80px;font-size:9.98px;font-weight:normal;color:#f0f0f0;letter-spacing:0.419px;font-family:'Liberation Sans',sans-serif;font-weight:500;-webkit-text-stroke:0.3px #f0f0f0;">igw-f7ce819f</div>
<div style="position:absolute;left:1000.75px;top:1077px;width:646.0px;height:23.6px;background:linear-gradient(to bottom,rgba(50,50,50,0),rgba(50,50,50,0.55));"></div>
<div style="position:absolute;left:1000.75px;top:1313.2px;width:646.0px;height:10px;background:linear-gradient(to top,rgba(50,50,50,0),rgba(50,50,50,0.3));"></div>
<div style="position:absolute;left:1000.75px;top:1321px;width:646.0px;height:20.5px;background:linear-gradient(to bottom,rgba(50,50,50,0),rgba(50,50,50,0.4));"></div>
<div style="position:absolute;left:1000.75px;top:1100.6px;width:646.0px;height:212.6px;background:#333333;box-shadow:0 0 18px 3px rgba(64,64,64,0.35);"></div>
<div style="position:absolute;left:1000.75px;top:1341.5px;width:646.0px;height:34.3px;background:#333333;box-shadow:0 0 18px 3px rgba(64,64,64,0.35);"></div>
<div style="position:absolute;left:1000.75px;top:1056px;width:193px;height:17.5px;background:linear-gradient(90deg,#333,#393939);border-radius:10px 0 0 0;box-shadow:0 0 2px 0.5px rgba(0,0,0,0.55),0 0 10px 1px rgba(60,60,60,0.25);"></div>
<div class="t" style="left:1072.40px;top:1058.82px;font-size:10.61px;font-weight:bold;color:#f4f4f4;letter-spacing:0.227px;font-family:'Liberation Sans',sans-serif;">ap-northeast-1a</div>
<div style="position:absolute;left:1261.75px;top:1056px;width:160px;height:17.5px;background:linear-gradient(90deg,#333,#393939);border-radius:0;box-shadow:0 0 2px 0.5px rgba(0,0,0,0.55),0 0 10px 1px rgba(60,60,60,0.25);"></div>
<div class="t" style="left:1300.80px;top:1058.82px;font-size:10.61px;font-weight:bold;color:#f4f4f4;letter-spacing:0.170px;font-family:'Liberation Sans',sans-serif;">ap-northeast-1c</div>
<div style="position:absolute;left:1489.75px;top:1056px;width:160px;height:17.5px;background:linear-gradient(90deg,#333,#393939);border-radius:0 10px 0 0;box-shadow:0 0 2px 0.5px rgba(0,0,0,0.55),0 0 10px 1px rgba(60,60,60,0.25);"></div>
<div class="t" style="left:1528.45px;top:1058.82px;font-size:10.61px;font-weight:bold;color:#f4f4f4;letter-spacing:0.179px;font-family:'Liberation Sans',sans-serif;">ap-northeast-1d</div>
<div class="t" style="left:1000.75px;top:1202.85px;font-size:9.98px;font-weight:bold;color:#f2f2f2;letter-spacing:-0.261px;font-family:'Liberation Sans',sans-serif;">Public</div>
<div class="t" style="left:1000.55px;top:1353.95px;font-size:9.98px;font-weight:bold;color:#f2f2f2;letter-spacing:-0.109px;font-family:'Liberation Sans',sans-serif;">Private</div>
<div style="position:absolute;left:1041.75px;top:1125px;width:144px;height:172px;background:#485659;border-radius:0 12px 12px 12px;"></div>
<svg style="position:absolute;left:1041.75px;top:1125px;overflow:visible;" width="25" height="25" viewBox="0 0 25 25"><rect x="0" y="0" width="25" height="25" fill="#6bb33c"/><g fill="none" stroke="#1d4a14" stroke-width="1" stroke-linejoin="round"><path d="M8.8,10 V8 A3.7,3.7 0 0 1 16.2,8 V10"/><rect x="6.6" y="10" width="11.8" height="9.9" rx="0.4"/><circle cx="12.5" cy="14.1" r="1.3"/><path d="M12.5,15.4 V17.6"/></g></svg>
<svg style="position:absolute;left:1047.75px;top:1131px;overflow:visible;" width="25" height="25" viewBox="0 0 25 25"><rect x="0" y="0" width="25" height="25" fill="#6bb33c"/><g fill="none" stroke="#1d4a14" stroke-width="1" stroke-linejoin="round"><path d="M8.8,10 V8 A3.7,3.7 0 0 1 16.2,8 V10"/><rect x="6.6" y="10" width="11.8" height="9.9" rx="0.4"/><circle cx="12.5" cy="14.1" r="1.3"/><path d="M12.5,15.4 V17.6"/></g></svg>
<svg style="position:absolute;left:1054.95px;top:1138.2px;overflow:visible;" width="25" height="25" viewBox="0 0 25 25"><rect x="0" y="0" width="25" height="25" fill="#6bb33c"/><g fill="none" stroke="#1d4a14" stroke-width="1" stroke-linejoin="round"><path d="M8.8,10 V8 A3.7,3.7 0 0 1 16.2,8 V10"/><rect x="6.6" y="10" width="11.8" height="9.9" rx="0.4"/><circle cx="12.5" cy="14.1" r="1.3"/><path d="M12.5,15.4 V17.6"/></g></svg>
<div class="t" style="left:1044.65px;top:1168.05px;font-size:9.98px;font-weight:normal;color:#eeeeee;letter-spacing:0.127px;font-family:'Liberation Sans',sans-serif;font-weight:500;-webkit-text-stroke:0.3px #eee;">1 Empty Subnet</div>
<div style="position:absolute;left:1092.85px;top:1216.1px;width:41px;height:41px;background:#6bb33c;border-radius:2px;"></div>
<svg style="position:absolute;left:1092.85px;top:1216.1px;overflow:visible;" width="41" height="41" viewBox="0 0 41 41"><g fill="none" stroke="#1d4a14" stroke-width="1.5" stroke-linejoin="round"><path d="M14.3,17 V14 A6.2,6.2 0 0 1 26.7,14 V17"/><rect x="11" y="17" width="19.5" height="16.5" rx="0.5"/><circle cx="20.9" cy="23.8" r="2.1"/><path d="M20.9,25.9 V30.3"/></g></svg>
<div class="t" style="left:1095.85px;top:1263.85px;font-size:9.98px;font-weight:normal;color:#f0f0f0;letter-spacing:0.425px;font-family:'Liberation Sans',sans-serif;font-weight:500;-webkit-text-stroke:0.3px #f0f0f0;">subnet-3f9fac...</div>
<div style="position:absolute;left:1269.75px;top:1125px;width:144px;height:172px;background:#485659;border-radius:0 12px 12px 12px;"></div>
<svg style="position:absolute;left:1269.75px;top:1125px;overflow:visible;" width="25" height="25" viewBox="0 0 25 25"><rect x="0" y="0" width="25" height="25" fill="#6bb33c"/><g fill="none" stroke="#1d4a14" stroke-width="1" stroke-linejoin="round"><path d="M8.8,10 V8 A3.7,3.7 0 0 1 16.2,8 V10"/><rect x="6.6" y="10" width="11.8" height="9.9" rx="0.4"/><circle cx="12.5" cy="14.1" r="1.3"/><path d="M12.5,15.4 V17.6"/></g></svg>
<svg style="position:absolute;left:1275.75px;top:1131px;overflow:visible;" width="25" height="25" viewBox="0 0 25 25"><rect x="0" y="0" width="25" height="25" fill="#6bb33c"/><g fill="none" stroke="#1d4a14" stroke-width="1" stroke-linejoin="round"><path d="M8.8,10 V8 A3.7,3.7 0 0 1 16.2,8 V10"/><rect x="6.6" y="10" width="11.8" height="9.9" rx="0.4"/><circle cx="12.5" cy="14.1" r="1.3"/><path d="M12.5,15.4 V17.6"/></g></svg>
<svg style="position:absolute;left:1282.95px;top:1138.2px;overflow:visible;" width="25" height="25" viewBox="0 0 25 25"><rect x="0" y="0" width="25" height="25" fill="#6bb33c"/><g fill="none" stroke="#1d4a14" stroke-width="1" stroke-linejoin="round"><path d="M8.8,10 V8 A3.7,3.7 0 0 1 16.2,8 V10"/><rect x="6.6" y="10" width="11.8" height="9.9" rx="0.4"/><circle cx="12.5" cy="14.1" r="1.3"/><path d="M12.5,15.4 V17.6"/></g></svg>
<div class="t" style="left:1272.65px;top:1168.05px;font-size:9.98px;font-weight:normal;color:#eeeeee;letter-spacing:0.127px;font-family:'Liberation Sans',sans-serif;font-weight:500;-webkit-text-stroke:0.3px #eee;">1 Empty Subnet</div>
<div style="position:absolute;left:1320.85px;top:1216.1px;width:41px;height:41px;background:#6bb33c;border-radius:2px;"></div>
<svg style="position:absolute;left:1320.85px;top:1216.1px;overflow:visible;" width="41" height="41" viewBox="0 0 41 41"><g fill="none" stroke="#1d4a14" stroke-width="1.5" stroke-linejoin="round"><path d="M14.3,17 V14 A6.2,6.2 0 0 1 26.7,14 V17"/><rect x="11" y="17" width="19.5" height="16.5" rx="0.5"/><circle cx="20.9" cy="23.8" r="2.1"/><path d="M20.9,25.9 V30.3"/></g></svg>
<div class="t" style="left:1323.85px;top:1263.85px;font-size:9.98px;font-weight:normal;color:#f0f0f0;letter-spacing:0.406px;font-family:'Liberation Sans',sans-serif;font-weight:500;-webkit-text-stroke:0.3px #f0f0f0;">subnet-d7a3cf...</div>
<div style="position:absolute;left:1497.75px;top:1125px;width:144px;height:172px;background:#485659;border-radius:0 12px 12px 12px;"></div>
<svg style="position:absolute;left:1497.75px;top:1125px;overflow:visible;" width="25" height="25" viewBox="0 0 25 25"><rect x="0" y="0" width="25" height="25" fill="#6bb33c"/><g fill="none" stroke="#1d4a14" stroke-width="1" stroke-linejoin="round"><path d="M8.8,10 V8 A3.7,3.7 0 0 1 16.2,8 V10"/><rect x="6.6" y="10" width="11.8" height="9.9" rx="0.4"/><circle cx="12.5" cy="14.1" r="1.3"/><path d="M12.5,15.4 V17.6"/></g></svg>
<svg style="position:absolute;left:1503.75px;top:1131px;overflow:visible;" width="25" height="25" viewBox="0 0 25 25"><rect x="0" y="0" width="25" height="25" fill="#6bb33c"/><g fill="none" stroke="#1d4a14" stroke-width="1" stroke-linejoin="round"><path d="M8.8,10 V8 A3.7,3.7 0 0 1 16.2,8 V10"/><rect x="6.6" y="10" width="11.8" height="9.9" rx="0.4"/><circle cx="12.5" cy="14.1" r="1.3"/><path d="M12.5,15.4 V17.6"/></g></svg>
<svg style="position:absolute;left:1510.95px;top:1138.2px;overflow:visible;" width="25" height="25" viewBox="0 0 25 25"><rect x="0" y="0" width="25" height="25" fill="#6bb33c"/><g fill="none" stroke="#1d4a14" stroke-width="1" stroke-linejoin="round"><path d="M8.8,10 V8 A3.7,3.7 0 0 1 16.2,8 V10"/><rect x="6.6" y="10" width="11.8" height="9.9" rx="0.4"/><circle cx="12.5" cy="14.1" r="1.3"/><path d="M12.5,15.4 V17.6"/></g></svg>
<div class="t" style="left:1500.65px;top:1168.05px;font-size:9.98px;font-weight:normal;color:#eeeeee;letter-spacing:0.127px;font-family:'Liberation Sans',sans-serif;font-weight:500;-webkit-text-stroke:0.3px #eee;">1 Empty Subnet</div>
<div style="position:absolute;left:1548.85px;top:1216.1px;width:41px;height:41px;background:#6bb33c;border-radius:2px;"></div>
<svg style="position:absolute;left:1548.85px;top:1216.1px;overflow:visible;" width="41" height="41" viewBox="0 0 41 41"><g fill="none" stroke="#1d4a14" stroke-width="1.5" stroke-linejoin="round"><path d="M14.3,17 V14 A6.2,6.2 0 0 1 26.7,14 V17"/><rect x="11" y="17" width="19.5" height="16.5" rx="0.5"/><circle cx="20.9" cy="23.8" r="2.1"/><path d="M20.9,25.9 V30.3"/></g></svg>
<div class="t" style="left:1551.85px;top:1263.85px;font-size:9.98px;font-weight:normal;color:#f0f0f0;letter-spacing:0.465px;font-family:'Liberation Sans',sans-serif;font-weight:500;-webkit-text-stroke:0.3px #f0f0f0;">subnet-97a8a...</div>
<svg style="position:absolute;left:0;top:0;" width="1669" height="980" viewBox="0 0 1669 980"><rect x="33.10000000000002" y="23.599999999999994" width="3000" height="3000" rx="16" fill="none" stroke="#dedede" stroke-width="1.6"/><rect x="85.60" y="116.60" width="788.70" height="628.40" rx="10" fill="none" stroke="#3a9db2" stroke-width="1.1" stroke-dasharray="3.8 1.8"/><circle cx="125.30" cy="118.40" r="6.3" fill="#e5393a"/><text x="125.30" y="121.30" text-anchor="middle" font-size="8.5" font-weight="bold" fill="#fff" font-family="Liberation Sans">2</text><rect x="138.50" y="208.10" width="725.2" height="515" rx="12.5" fill="none" stroke="#76ad54" stroke-width="1.3"/><rect x="230.50" y="402.80" width="159.00" height="302.8" fill="none" stroke="#3a9db2" stroke-width="1.1" stroke-dasharray="3.8 1.8"/><rect x="458.50" y="402.80" width="159.00" height="302.8" fill="none" stroke="#3a9db2" stroke-width="1.1" stroke-dasharray="3.8 1.8"/><rect x="686.50" y="402.80" width="159.00" height="302.8" fill="none" stroke="#3a9db2" stroke-width="1.1" stroke-dasharray="3.8 1.8"/><rect x="889.35" y="116.60" width="788.70" height="628.40" rx="10" fill="none" stroke="#3a9db2" stroke-width="1.1" stroke-dasharray="3.8 1.8"/><circle cx="929.05" cy="118.40" r="6.3" fill="#e5393a"/><text x="929.05" y="121.30" text-anchor="middle" font-size="8.5" font-weight="bold" fill="#fff" font-family="Liberation Sans">2</text><rect x="942.25" y="208.10" width="2000" height="515" rx="12.5" fill="none" stroke="#76ad54" stroke-width="1.3"/><rect x="1034.25" y="402.80" width="159.00" height="302.8" fill="none" stroke="#3a9db2" stroke-width="1.1" stroke-dasharray="3.8 1.8"/><rect x="1262.25" y="402.80" width="159.00" height="302.8" fill="none" stroke="#3a9db2" stroke-width="1.1" stroke-dasharray="3.8 1.8"/><rect x="1490.25" y="402.80" width="159.00" height="302.8" fill="none" stroke="#3a9db2" stroke-width="1.1" stroke-dasharray="3.8 1.8"/><rect x="1718.25" y="402.80" width="159.00" height="302.8" fill="none" stroke="#3a9db2" stroke-width="1.1" stroke-dasharray="3.8 1.8"/><rect x="85.60" y="787.60" width="788.70" height="628.40" rx="10" fill="none" stroke="#3a9db2" stroke-width="1.1" stroke-dasharray="3.8 1.8"/><circle cx="125.30" cy="789.40" r="6.3" fill="#e5393a"/><text x="125.30" y="792.30" text-anchor="middle" font-size="8.5" font-weight="bold" fill="#fff" font-family="Liberation Sans">2</text><rect x="138.50" y="879.10" width="725.2" height="515" rx="12.5" fill="none" stroke="#76ad54" stroke-width="1.3"/><rect x="230.50" y="1073.80" width="159.00" height="302.8" fill="none" stroke="#3a9db2" stroke-width="1.1" stroke-dasharray="3.8 1.8"/><rect x="458.50" y="1073.80" width="159.00" height="302.8" fill="none" stroke="#3a9db2" stroke-width="1.1" stroke-dasharray="3.8 1.8"/><rect x="686.50" y="1073.80" width="159.00" height="302.8" fill="none" stroke="#3a9db2" stroke-width="1.1" stroke-dasharray="3.8 1.8"/><rect x="889.35" y="787.60" width="788.70" height="628.40" rx="10" fill="none" stroke="#3a9db2" stroke-width="1.1" stroke-dasharray="3.8 1.8"/><circle cx="929.05" cy="789.40" r="6.3" fill="#e5393a"/><text x="929.05" y="792.30" text-anchor="middle" font-size="8.5" font-weight="bold" fill="#fff" font-family="Liberation Sans">2</text><rect x="942.25" y="879.10" width="725.2" height="515" rx="12.5" fill="none" stroke="#76ad54" stroke-width="1.3"/><rect x="1034.25" y="1073.80" width="159.00" height="302.8" fill="none" stroke="#3a9db2" stroke-width="1.1" stroke-dasharray="3.8 1.8"/><rect x="1262.25" y="1073.80" width="159.00" height="302.8" fill="none" stroke="#3a9db2" stroke-width="1.1" stroke-dasharray="3.8 1.8"/><rect x="1490.25" y="1073.80" width="159.00" height="302.8" fill="none" stroke="#3a9db2" stroke-width="1.1" stroke-dasharray="3.8 1.8"/><rect x="1632.2" y="794.2" width="21.7" height="21.7" rx="6" fill="#f7f7f7"/><g fill="none" stroke="#1e1e1e" stroke-width="1.4" stroke-linecap="round"><circle cx="1641.8" cy="803.3" r="4.6"/><path d="M1645.2,806.7 L1649.3,810.8"/><path d="M1639.6,803.3 H1644 M1641.8,801.1 V805.5" stroke-width="1.3"/></g><rect x="1632.2" y="948.8" width="21.7" height="21.7" rx="6" fill="#f7f7f7"/><g fill="none" stroke="#1e1e1e" stroke-width="1.4" stroke-linecap="round"><circle cx="1641.8" cy="957.9000000000001" r="4.6"/><path d="M1645.2,961.3 L1649.3,965.4000000000001"/><path d="M1639.6,957.9000000000001 H1644" stroke-width="1.3"/></g><rect x="1639.4" y="823.2" width="8" height="118.8" rx="4" fill="#4a4a4a"/><path d="M1639.4,890 V827.2 A4,4 0 0 1 1647.4,827.2 V890 Z" fill="#ececec"/><circle cx="1643.3" cy="894.8" r="7.6" fill="#575757"/></svg>
<svg style="position:absolute;left:0;top:0;" width="1669" height="980" viewBox="251 100 1669 980"><path d="M556.70,351.10 L559.20,363.30 C564.00,457.20 552.70,551.50 560.60,645.00" fill="none" stroke="#c4c4c4" stroke-width="1.7"/><path d="M556.70,351.10 L559.20,363.30 C608.50,460.80 756.30,553.30 788.50,645.00" fill="none" stroke="#c4c4c4" stroke-width="1.7"/><path d="M556.70,351.10 L559.20,363.30 C671.50,472.20 923.40,531.70 1016.30,645.00" fill="none" stroke="#c4c4c4" stroke-width="1.7"/><path d="M1360.00,351.30 L1363.00,364.60 C1366.10,458.00 1358.50,551.60 1364.10,645.00" fill="none" stroke="#c4c4c4" stroke-width="1.7"/><path d="M1360.00,351.30 L1363.00,364.60 C1413.70,463.00 1557.80,550.60 1592.00,645.00" fill="none" stroke="#c4c4c4" stroke-width="1.7"/><path d="M1360.00,351.30 L1363.00,364.60 C1481.20,475.10 1723.30,529.70 1820.00,645.00" fill="none" stroke="#c4c4c4" stroke-width="1.7"/><path d="M1360.00,351.30 L1363.00,364.60 C1532.70,461.10 1737.50,501.70 1920.00,572.00" fill="none" stroke="#c4c4c4" stroke-width="1.7"/><path d="M556.70,1022.10 L559.20,1034.30 C564.00,1128.20 552.70,1222.50 560.60,1316.00" fill="none" stroke="#c4c4c4" stroke-width="1.7"/><path d="M556.70,1022.10 L559.20,1034.30 C608.50,1131.80 756.30,1224.30 788.50,1316.00" fill="none" stroke="#c4c4c4" stroke-width="1.7"/><path d="M556.70,1022.10 L559.20,1034.30 C671.50,1143.20 923.40,1202.70 1016.30,1316.00" fill="none" stroke="#c4c4c4" stroke-width="1.7"/><path d="M1360.45,1022.10 L1362.95,1034.30 C1367.75,1128.20 1356.45,1222.50 1364.35,1316.00" fill="none" stroke="#c4c4c4" stroke-width="1.7"/><path d="M1360.45,1022.10 L1362.95,1034.30 C1412.25,1131.80 1560.05,1224.30 1592.25,1316.00" fill="none" stroke="#c4c4c4" stroke-width="1.7"/><path d="M1360.45,1022.10 L1362.95,1034.30 C1475.25,1143.20 1727.15,1202.70 1820.05,1316.00" fill="none" stroke="#c4c4c4" stroke-width="1.7"/></svg>
</div>
<div style="position:absolute;left:251px;top:0px;width:1669px;height:50px;background:#ffffff;"></div>
<div style="position:absolute;left:251px;top:50px;width:1669px;height:50px;background:#eeeeee;"></div>
<div class="t" style="left:265.00px;top:18.40px;font-size:13.7px;font-weight:bold;color:#111;letter-spacing:0.225px;font-family:'Liberation Sans',sans-serif;">DIAGRAM</div>
<svg style="position:absolute;left:350px;top:13px;overflow:visible;" width="24" height="24" viewBox="0 0 24 24"><g fill="none" stroke="#2f5fe0" stroke-width="2"><circle cx="17.8" cy="5.2" r="2.8"/><circle cx="5.7" cy="11.1" r="2.8"/><circle cx="17.8" cy="18" r="2.8"/><path d="M8.2,9.8 L15.3,6.4 M8.2,12.4 L15.3,16.7"/></g></svg>
<div class="t" style="left:384.80px;top:19.37px;font-size:10.2px;font-weight:bold;color:#2f5fe0;letter-spacing:0.181px;font-family:'Liberation Sans',sans-serif;">Share this view</div>
<div style="position:absolute;left:1103px;top:7px;width:616px;height:34px;border:1px solid #dcdcdc;border-radius:7px;background:#fff;"></div>
<div class="t" style="left:1116.00px;top:19.13px;font-size:12.6px;font-weight:normal;color:#a3a3ab;letter-spacing:0.151px;font-family:'Liberation Sans',sans-serif;">Find resource...</div>
<svg style="position:absolute;left:1690px;top:12px;overflow:visible;" width="26" height="26" viewBox="0 0 26 26"><g fill="none" stroke="#777" stroke-width="1.7" stroke-linecap="round"><circle cx="11.5" cy="11" r="8"/><path d="M17.3,16.8 L23,22.5"/></g></svg>
<svg style="position:absolute;left:1748px;top:15px;overflow:visible;" width="24" height="20" viewBox="0 0 24 20"><g fill="none" stroke="#2d8de6" stroke-width="1.8" stroke-linecap="round" stroke-linejoin="round"><path d="M2.5,2.7 L4.2,4.4 L7.3,1.5 M2.5,8.8 L4.2,10.5 L7.3,7.6 M2.5,14.9 L4.2,16.6 L7.3,13.7"/><path d="M12,3.6 H21 M12,9.7 H21 M12,15.8 H21"/></g></svg>
<svg style="position:absolute;left:1800px;top:13px;overflow:visible;" width="24" height="24" viewBox="0 0 24 24"><g fill="none" stroke="#f0a030" stroke-width="1.8" stroke-linecap="round"><circle cx="12" cy="11.7" r="4.3"/><path d="M12,1.8 V3.2 M12,20.2 V21.6 M2.1,11.7 H3.5 M20.5,11.7 H21.9 M5,4.7 L5.9,5.6 M18.1,17.8 L19,18.7 M5,18.7 L5.9,17.8 M18.1,5.6 L19,4.7"/></g></svg>
<div style="position:absolute;left:1835px;top:7px;width:37px;height:37px;background:#e6e6e6;border-radius:50%;"></div>
<svg style="position:absolute;left:1844px;top:15px;overflow:visible;" width="20" height="20" viewBox="0 0 20 20"><g fill="none" stroke="#222" stroke-width="1.7" stroke-linecap="round"><circle cx="9.6" cy="5.5" r="3.3"/><path d="M4.3,18 V16.5 C4.3,13.6 6.6,11.6 9.6,11.6 C12.6,11.6 14.9,13.6 14.9,16.5 V18"/></g></svg>
<svg style="position:absolute;left:1886px;top:19px;overflow:visible;" width="17" height="12" viewBox="0 0 17 12"><path d="M2,2.5 L8.5,9 L15,2.5" fill="none" stroke="#111" stroke-width="2.2" stroke-linecap="round" stroke-linejoin="round"/></svg>
<svg style="position:absolute;left:271px;top:65px;overflow:visible;" width="23" height="21" viewBox="0 0 23 21"><path d="M11.2,1.4 C16.8,1.4 21.2,5.3 21.2,10.1 C21.2,14.9 16.8,18.6 11.2,18.6 C9.7,18.6 8.3,18.3 7,17.8 L1.3,19.4 L2.7,15 C1.7,13.6 1.2,11.9 1.2,10.1 C1.2,5.3 5.6,1.4 11.2,1.4 Z" fill="#000"/></svg>
<div class="t" style="left:302.50px;top:67.18px;font-size:14.2px;font-weight:normal;color:#1c1c1c;letter-spacing:0.673px;font-family:'Liberation Sans',sans-serif;-webkit-text-stroke:0.25px #1c1c1c;">Explore your cloud infrastructure visually. Everything is clickable.</div>
<div style="position:absolute;left:1250px;top:63px;width:46px;height:24px;background:#666;border-radius:12px;"></div>
<div style="position:absolute;left:1275px;top:66px;width:18px;height:18px;background:#fff;border-radius:50%;"></div>
<svg style="position:absolute;left:1275px;top:66px;overflow:visible;" width="18" height="18" viewBox="0 0 18 18"><path d="M9.6,3.4 A5.8,5.8 0 1 0 14.8,11 A4.6,4.6 0 0 1 9.6,3.4 Z" fill="none" stroke="#2a22c8" stroke-width="1.5" stroke-linejoin="round"/><path d="M13.2,3.5 L13.8,5 L15.3,5.6 L13.8,6.2 L13.2,7.7 L12.6,6.2 L11.1,5.6 L12.6,5 Z" fill="#2a22c8"/></svg>
<div style="position:absolute;left:1304.5px;top:56px;width:1px;height:36px;background:#e6e6e6;"></div>
<div style="position:absolute;left:1451px;top:56px;width:1px;height:36px;background:#e6e6e6;"></div>
<div style="position:absolute;left:1643px;top:56px;width:1px;height:36px;background:#e6e6e6;"></div>
<div style="position:absolute;left:1794.5px;top:56px;width:1px;height:36px;background:#e6e6e6;"></div>
<svg style="position:absolute;left:1326px;top:68px;overflow:visible;" width="15" height="15" viewBox="0 0 15 15"><g fill="none" stroke="#333333" stroke-width="1.6" stroke-linecap="round" stroke-linejoin="round"><path d="M1.5,13.5 L6,9 M2.2,9 H6 V12.8 M13.5,1.5 L9,6 M9,2.2 V6 H12.8"/></g></svg>
<div class="t" style="left:1351.90px;top:68.36px;font-size:12.8px;font-weight:bold;color:#333333;letter-spacing:-0.099px;font-family:'Liberation Sans',sans-serif;">Collapse All</div>
<svg style="position:absolute;left:1472px;top:67px;overflow:visible;" width="17" height="16" viewBox="0 0 17 16"><g fill="none" stroke="#333333" stroke-width="1.4" stroke-linecap="round"><path d="M2,8 C4,4.5 6.3,3 8.5,3 C10.7,3 13,4.5 15,8 C13,11.5 10.7,13 8.5,13 C6.3,13 4,11.5 2,8 Z"/><circle cx="8.5" cy="8" r="2.4"/><path d="M2.5,1.5 L14.5,14.5"/></g></svg>
<div class="t" style="left:1498.90px;top:68.36px;font-size:12.8px;font-weight:bold;color:#333333;letter-spacing:-0.033px;font-family:'Liberation Sans',sans-serif;">Show/Hide Options</div>
<svg style="position:absolute;left:1665px;top:67px;overflow:visible;" width="16" height="16" viewBox="0 0 16 16"><path d="M1.5,2.8 C1.5,2.1 2.1,1.5 2.8,1.5 H7.6 L14.3,8.2 C14.8,8.7 14.8,9.5 14.3,10 L10,14.3 C9.5,14.8 8.7,14.8 8.2,14.3 L1.5,7.6 Z" fill="#333333"/><circle cx="5" cy="5" r="1.3" fill="#eee"/></svg>
<div class="t" style="left:1691.00px;top:68.36px;font-size:12.8px;font-weight:bold;color:#333333;letter-spacing:0.029px;font-family:'Liberation Sans',sans-serif;">Tag Filtering</div>
<svg style="position:absolute;left:1816px;top:68px;overflow:visible;" width="15" height="15" viewBox="0 0 15 15"><g fill="none" stroke="#333333" stroke-width="1.5" stroke-linecap="round" stroke-linejoin="round"><path d="M7.5,1.5 V9.5 M4.3,6.5 L7.5,9.7 L10.7,6.5 M1.5,10 V13 H13.5 V10"/></g></svg>
<div class="t" style="left:1842.00px;top:68.36px;font-size:12.8px;font-weight:bold;color:#333333;letter-spacing:-0.308px;font-family:'Liberation Sans',sans-serif;">Export</div>
<div style="position:absolute;left:0px;top:0px;width:250px;height:1080px;background:#030055;"></div>
<div style="position:absolute;left:250px;top:0px;width:1px;height:1080px;background:#3e3c84;"></div>
<div class="t" style="left:0;top:0;"></div>
<div class="t" style="left:16.00px;top:13.41px;font-size:25.5px;font-weight:bold;color:#2aa6f2;letter-spacing:-1.360px;font-family:'Liberation Sans',sans-serif;background:linear-gradient(90deg,#1d8ff0,#45c0fa);-webkit-background-clip:text;background-clip:text;color:transparent;-webkit-text-stroke:0.5px transparent;">hyper</div>
<div class="t" style="left:80.60px;top:13.41px;font-size:25.5px;font-weight:bold;color:#ffffff;letter-spacing:-1.076px;font-family:'Liberation Sans',sans-serif;-webkit-text-stroke:0.5px #fff;">glance</div>
<svg style="position:absolute;left:218px;top:20px;overflow:visible;" width="18" height="16" viewBox="0 0 18 16"><g fill="none" stroke="#fff" stroke-width="1.5" stroke-linecap="round" stroke-linejoin="round"><path d="M3,5 H16 M3,5 L6.5,1.8 M3,5 L6.5,8.2"/><path d="M15,11.5 H2 M15,11.5 L11.5,8.3 M15,11.5 L11.5,14.7"/></g></svg>
<svg style="position:absolute;left:35px;top:65px;overflow:visible;" width="16" height="16" viewBox="0 0 16 16"><g fill="none" stroke="#fff" stroke-width="1.3" stroke-linejoin="round" stroke-linecap="round"><path d="M1.5,1.5 H13 L8.5,7 V12.5 L6,11 V7 Z"/><path d="M12,8 V14 M10,12 L12,14 L14,12"/></g></svg>
<div class="t" style="left:65.70px;top:67.15px;font-size:14px;font-weight:bold;color:#ffffff;letter-spacing:-0.214px;font-family:'Liberation Sans',sans-serif;">Filter By</div>
<div style="position:absolute;left:24px;top:99px;width:202px;height:21px;background:#eeeef4;border-radius:11px;"></div>
<div class="t" style="left:34.50px;top:101.85px;font-size:14px;font-weight:normal;color:#111;letter-spacing:0.697px;font-family:'Liberation Sans',sans-serif;-webkit-text-stroke:0.35px #111;">All Environments</div>
<svg style="position:absolute;left:26px;top:164px;overflow:visible;" width="14" height="14" viewBox="0 0 14 14"><g fill="none" stroke="#fff" stroke-width="1.3"><rect x="0.8" y="0.8" width="4.4" height="5.6" rx="1.2"/><rect x="7.8" y="0.8" width="5.4" height="3.6" rx="1.2"/><rect x="0.8" y="8.6" width="4.4" height="4.4" rx="1.2"/><rect x="7.8" y="6.6" width="5.4" height="6.4" rx="1.2"/></g></svg>
<div class="t" style="left:51.00px;top:163.66px;font-size:12.8px;font-weight:bold;color:#ffffff;letter-spacing:0.114px;font-family:'Liberation Sans',sans-serif;">Dashboards</div>
<svg style="position:absolute;left:212px;top:166px;overflow:visible;" width="11" height="8" viewBox="0 0 11 8"><path d="M1,1.5 L5.5,6 L10,1.5" fill="none" stroke="#fff" stroke-width="1.3" stroke-linecap="round"/></svg>
<div class="t" style="left:63.00px;top:190.15px;font-size:14px;font-weight:bold;color:#ffffff;letter-spacing:0.392px;font-family:'Liberation Sans',sans-serif;">Overview</div>
<div class="t" style="left:63.00px;top:222.15px;font-size:14px;font-weight:bold;color:#ffffff;letter-spacing:0.055px;font-family:'Liberation Sans',sans-serif;">AWS</div>
<div class="t" style="left:63.00px;top:254.15px;font-size:14px;font-weight:bold;color:#ffffff;letter-spacing:0.312px;font-family:'Liberation Sans',sans-serif;">Cost Overview</div>
<div class="t" style="left:63.00px;top:286.15px;font-size:14px;font-weight:bold;color:#ffffff;letter-spacing:0.026px;font-family:'Liberation Sans',sans-serif;">Azure</div>
<div class="t" style="left:63.00px;top:318.15px;font-size:14px;font-weight:bold;color:#ffffff;letter-spacing:0.331px;font-family:'Liberation Sans',sans-serif;">Kubernetes</div>
<div class="t" style="left:63.00px;top:349.15px;font-size:14px;font-weight:bold;color:#ffffff;letter-spacing:-0.269px;font-family:'Liberation Sans',sans-serif;">GCP</div>
<svg style="position:absolute;left:37px;top:190px;overflow:visible;" width="14" height="14" viewBox="0 0 14 14"><path d="M1,8 H4 L6,4 L8.5,12 L10,7 H13" fill="none" stroke="#fff" stroke-width="1.3" stroke-linecap="round" stroke-linejoin="round"/></svg>
<svg style="position:absolute;left:37px;top:222px;overflow:visible;" width="14" height="14" viewBox="0 0 14 14"><text x="7" y="7" text-anchor="middle" font-size="6.5" font-weight="bold" fill="#fff" font-family="Liberation Sans">aws</text><path d="M2,9.5 Q7,12.5 12,9.5 M10.5,9 L12.3,9.4 L11.8,11" fill="none" stroke="#fff" stroke-width="1.3" stroke-linecap="round" stroke-linejoin="round" stroke-width="1"/></svg>
<svg style="position:absolute;left:37px;top:254px;overflow:visible;" width="14" height="14" viewBox="0 0 14 14"><path d="M6.5,1.5 A5.8,5.8 0 1 0 12.3,7.5 H6.5 Z" fill="#fff"/><path d="M8,0.5 A5.8,5.8 0 0 1 13.3,6 H8 Z" fill="#fff"/></svg>
<svg style="position:absolute;left:37px;top:286px;overflow:visible;" width="14" height="14" viewBox="0 0 14 14"><path d="M6.2,1.2 L1,12 H4.6 L9,3.6 Z" fill="none" stroke="#fff" stroke-width="1.3" stroke-linecap="round" stroke-linejoin="round" stroke-width="1.1"/><path d="M9.2,4.8 L13.2,12.4 H4.4 L9.6,11.2 L6.8,7.6 Z" fill="none" stroke="#fff" stroke-width="1.3" stroke-linecap="round" stroke-linejoin="round" stroke-width="1.1"/></svg>
<svg style="position:absolute;left:37px;top:318px;overflow:visible;" width="14" height="14" viewBox="0 0 14 14"><path d="M7,0.8 L12.2,3.3 L13.4,9 L9.8,13.4 H4.2 L0.6,9 L1.8,3.3 Z" fill="#fff"/><circle cx="7" cy="7.3" r="3" fill="none" stroke="#030055" stroke-width="1"/><path d="M7,3 V11.5 M3,7.3 H11 M4.2,4.5 L9.8,10 M9.8,4.5 L4.2,10" stroke="#030055" stroke-width="0.7"/></svg>
<svg style="position:absolute;left:37px;top:350px;overflow:visible;" width="14" height="14" viewBox="0 0 14 14"><path d="M4,11.3 A3,3 0 0 1 3.4,5.5 A4,4 0 0 1 10.8,5.5 A3,3 0 0 1 10.2,11.3 Z" fill="none" stroke="#fff" stroke-width="1.3" stroke-linecap="round" stroke-linejoin="round" stroke-width="2"/><path d="M7,8.5 V11" stroke="#fff" stroke-width="1.5"/></svg>
<div class="t" style="left:24.00px;top:404.27px;font-size:11.5px;font-weight:bold;color:#2a8cf4;letter-spacing:0.092px;font-family:'Liberation Sans',sans-serif;">ANALYZE</div>
<div class="t" style="left:24.00px;top:517.27px;font-size:11.5px;font-weight:bold;color:#2a8cf4;letter-spacing:0.099px;font-family:'Liberation Sans',sans-serif;">OPTIMIZE</div>
<div class="t" style="left:24.00px;top:662.27px;font-size:11.5px;font-weight:bold;color:#2a8cf4;letter-spacing:-0.107px;font-family:'Liberation Sans',sans-serif;">ALLOCATE</div>
<div class="t" style="left:24.00px;top:776.27px;font-size:11.5px;font-weight:bold;color:#2a8cf4;letter-spacing:0.318px;font-family:'Liberation Sans',sans-serif;">INVENTORY</div>
<div class="t" style="left:55.00px;top:431.45px;font-size:14px;font-weight:bold;color:#ffffff;letter-spacing:-0.008px;font-family:'Liberation Sans',sans-serif;">Cost Explorer</div>
<div class="t" style="left:55.00px;top:462.55px;font-size:14px;font-weight:bold;color:#ffffff;letter-spacing:0.408px;font-family:'Liberation Sans',sans-serif;">Trends &amp; Anomalies</div>
<div class="t" style="left:55.00px;top:544.85px;font-size:14px;font-weight:bold;color:#ffffff;letter-spacing:1.158px;font-family:'Liberation Sans',sans-serif;">Wastage</div>
<div class="t" style="left:55.00px;top:575.95px;font-size:14px;font-weight:bold;color:#ffffff;letter-spacing:0.865px;font-family:'Liberation Sans',sans-serif;">Commitments</div>
<div class="t" style="left:55.00px;top:608.15px;font-size:14px;font-weight:bold;color:#ffffff;letter-spacing:-0.025px;font-family:'Liberation Sans',sans-serif;">Right Sizing</div>
<div class="t" style="left:55.00px;top:690.35px;font-size:14px;font-weight:bold;color:#ffffff;letter-spacing:0.018px;font-family:'Liberation Sans',sans-serif;">Billing Report</div>
<div class="t" style="left:55.00px;top:722.55px;font-size:14px;font-weight:bold;color:#ffffff;letter-spacing:0.333px;font-family:'Liberation Sans',sans-serif;">Budgets</div>
<div class="t" style="left:55.00px;top:835.15px;font-size:14px;font-weight:bold;color:#ffffff;letter-spacing:0.461px;font-family:'Liberation Sans',sans-serif;">Search</div>
<div class="t" style="left:55.00px;top:803.24px;font-size:14.6px;font-weight:normal;color:#2f8cf0;letter-spacing:0.746px;font-family:'Liberation Sans',sans-serif;-webkit-text-stroke:0.45px #2f8cf0;">Infra Diagram</div>
<div style="position:absolute;left:0;top:850px;width:250px;height:26px;overflow:hidden;">
<div class="t" style="left:55.00px;top:16.15px;font-size:14px;font-weight:bold;color:#ffffff;letter-spacing:-0.281px;font-family:'Liberation Sans',sans-serif;">Rules</div>
<svg style="position:absolute;left:29px;top:16px" width="14" height="14"><path d="M7,1.5 L12.5,3.5 V8 C12.5,11 10,13 7,14 C4,13 1.5,11 1.5,8 V3.5 Z" fill="none" stroke="#fff" stroke-width="1.3"/></svg>
</div>
<svg style="position:absolute;left:30px;top:432px;overflow:visible;" width="13" height="12" viewBox="0 0 13 12"><path d="M1,9.5 L4.5,6 L7,8 L11.5,3 M8.5,3 H11.5 V6" fill="none" stroke="#fff" stroke-width="1.3" stroke-linecap="round" stroke-linejoin="round"/></svg>
<svg style="position:absolute;left:30px;top:463px;overflow:visible;" width="13" height="13" viewBox="0 0 13 13"><path d="M1,1 V12 H12.5 M3,10 V8 M5.5,10 V6.5 M8,10 V7.5 M10.5,10 V8.5 M1.5,6 L4,3.5 L6.5,5.5 L9,3 L12,5.5" fill="none" stroke="#fff" stroke-width="1.3" stroke-linecap="round" stroke-linejoin="round" stroke-width="1.1"/></svg>
<svg style="position:absolute;left:30px;top:545px;overflow:visible;" width="13" height="13" viewBox="0 0 13 13"><path d="M7.5,1 L2.5,7.5 H6.5 L5.5,12 L10.5,5.5 H6.5 Z" fill="none" stroke="#fff" stroke-width="1.3" stroke-linecap="round" stroke-linejoin="round"/></svg>
<svg style="position:absolute;left:29px;top:576px;overflow:visible;" width="14" height="13" viewBox="0 0 14 13"><rect x="1" y="1" width="11" height="4.5" rx="1.2" fill="none" stroke="#fff" stroke-width="1.3" stroke-linecap="round" stroke-linejoin="round"/><path d="M12,8.5 V7 H2.2 A1.2,1.2 0 0 0 1,8.2 V10.3 A1.2,1.2 0 0 0 2.2,11.5 H8" fill="none" stroke="#fff" stroke-width="1.3" stroke-linecap="round" stroke-linejoin="round"/><path d="M3.5,3.2 H5 M3.5,9.3 H5" fill="none" stroke="#fff" stroke-width="1.3" stroke-linecap="round" stroke-linejoin="round"/><circle cx="11.3" cy="11" r="1.6" fill="#fff"/></svg>
<svg style="position:absolute;left:30px;top:608px;overflow:visible;" width="13" height="13" viewBox="0 0 13 13"><rect x="2.5" y="2.5" width="8" height="8" rx="1" fill="none" stroke="#fff" stroke-width="1.3" stroke-linecap="round" stroke-linejoin="round"/><rect x="5" y="5" width="3" height="3" fill="#fff"/><path d="M4.5,0.5 V2 M6.5,0.5 V2 M8.5,0.5 V2 M4.5,11 V12.5 M6.5,11 V12.5 M8.5,11 V12.5 M0.5,4.5 H2 M0.5,6.5 H2 M0.5,8.5 H2 M11,4.5 H12.5 M11,6.5 H12.5 M11,8.5 H12.5" fill="none" stroke="#fff" stroke-width="1.3" stroke-linecap="round" stroke-linejoin="round" stroke-width="0.9"/></svg>
<svg style="position:absolute;left:30px;top:690px;overflow:visible;" width="13" height="14" viewBox="0 0 13 14"><path d="M2,1 H7.5 L11,4.5 V12.8 H2 Z M7.5,1 V4.5 H11 M4,7 H9 M4,9 H9 M4,11 H7" fill="none" stroke="#fff" stroke-width="1.3" stroke-linecap="round" stroke-linejoin="round" stroke-width="1.1"/></svg>
<svg style="position:absolute;left:30px;top:722px;overflow:visible;" width="13" height="14" viewBox="0 0 13 14"><rect x="1.2" y="2.5" width="10.6" height="10" rx="1.3" fill="none" stroke="#fff" stroke-width="1.3" stroke-linecap="round" stroke-linejoin="round"/><path d="M1.2,5.8 H11.8 M4,1 V3.5 M9,1 V3.5" fill="none" stroke="#fff" stroke-width="1.3" stroke-linecap="round" stroke-linejoin="round"/><rect x="3.3" y="8.5" width="1.8" height="1.8" fill="#fff"/></svg>
<svg style="position:absolute;left:29px;top:803px;overflow:visible;" width="14" height="14" viewBox="0 0 14 14"><g fill="none" stroke="#2f8cf0" stroke-width="1.3"><circle cx="7" cy="3" r="2"/><circle cx="3" cy="11" r="2"/><circle cx="11" cy="11" r="2"/><path d="M6,4.8 L4,9.2 M8,4.8 L10,9.2 M5,11 H9"/></g></svg>
<svg style="position:absolute;left:29px;top:835px;overflow:visible;" width="14" height="14" viewBox="0 0 14 14"><circle cx="6" cy="6" r="4.5" fill="none" stroke="#fff" stroke-width="1.3" stroke-linecap="round" stroke-linejoin="round"/><path d="M9.3,9.3 L12.8,12.8" fill="none" stroke="#fff" stroke-width="1.3" stroke-linecap="round" stroke-linejoin="round"/></svg>
<svg style="position:absolute;left:35px;top:903px;overflow:visible;" width="24" height="22" viewBox="0 0 24 22"><path d="M12,1.5 C12.8,1.5 13.3,2 13.8,2.8 L22.5,18 C23.2,19.3 22.5,20.8 21,20.8 H3 C1.5,20.8 0.8,19.3 1.5,18 L10.2,2.8 C10.7,2 11.2,1.5 12,1.5 Z" fill="#f0d066"/><path d="M12,7.5 V13.5" stroke="#1a1a3a" stroke-width="2.2" stroke-linecap="round"/><circle cx="12" cy="17" r="1.2" fill="#1a1a3a"/></svg>
<div class="t" style="left:76.80px;top:894.28px;font-size:10.3px;font-weight:bold;color:#e7c85c;letter-spacing:0.200px;font-family:'Liberation Sans',sans-serif;">Hyperglance experienced</div>
<div class="t" style="left:71.00px;top:909.28px;font-size:10.3px;font-weight:bold;color:#e7c85c;letter-spacing:0.048px;font-family:'Liberation Sans',sans-serif;">errors while collecting cloud</div>
<div class="t" style="left:128.00px;top:924.98px;font-size:10.3px;font-weight:bold;color:#e7c85c;letter-spacing:0.640px;font-family:'Liberation Sans',sans-serif;">data.</div>
<div style="position:absolute;left:24px;top:962px;width:202px;height:1px;background:#3d3b86;"></div>
<svg style="position:absolute;left:29px;top:990px;overflow:visible;" width="14" height="14" viewBox="0 0 14 14"><path d="M7,0.5 L8.4,1.8 L10.2,1.3 L10.8,3.1 L12.6,3.7 L12.1,5.5 L13.5,7 L12.1,8.5 L12.6,10.3 L10.8,10.9 L10.2,12.7 L8.4,12.2 L7,13.5 L5.6,12.2 L3.8,12.7 L3.2,10.9 L1.4,10.3 L1.9,8.5 L0.5,7 L1.9,5.5 L1.4,3.7 L3.2,3.1 L3.8,1.3 L5.6,1.8 Z" fill="#fff"/><circle cx="7" cy="7" r="2.2" fill="#030055"/></svg>
<div class="t" style="left:55.50px;top:990.15px;font-size:14px;font-weight:bold;color:#ffffff;letter-spacing:0.182px;font-family:'Liberation Sans',sans-serif;">Settings</div>
<svg style="position:absolute;left:29px;top:1021px;overflow:visible;" width="14" height="14" viewBox="0 0 14 14"><circle cx="7" cy="7" r="5.8" fill="none" stroke="#fff" stroke-width="1.3" stroke-linecap="round" stroke-linejoin="round" stroke-width="1.2"/><path d="M5.2,5.3 A1.9,1.9 0 1 1 7.6,7.1 C7.2,7.3 7,7.6 7,8.2 V8.6" fill="none" stroke="#fff" stroke-width="1.3" stroke-linecap="round" stroke-linejoin="round" stroke-width="1.2"/><circle cx="7" cy="10.4" r="0.8" fill="#fff"/></svg>
<div class="t" style="left:55.50px;top:1021.15px;font-size:14px;font-weight:bold;color:#ffffff;letter-spacing:0.255px;font-family:'Liberation Sans',sans-serif;">Help &amp; Support</div>
<div class="t" style="left:72.60px;top:1050.11px;font-size:10.5px;font-weight:normal;color:#f4f4fa;letter-spacing:-0.170px;font-family:'Liberation Mono',monospace;-webkit-text-stroke:0.3px #f4f4fa;">v8.1.51 | eb89e67</div>
</body></html>
